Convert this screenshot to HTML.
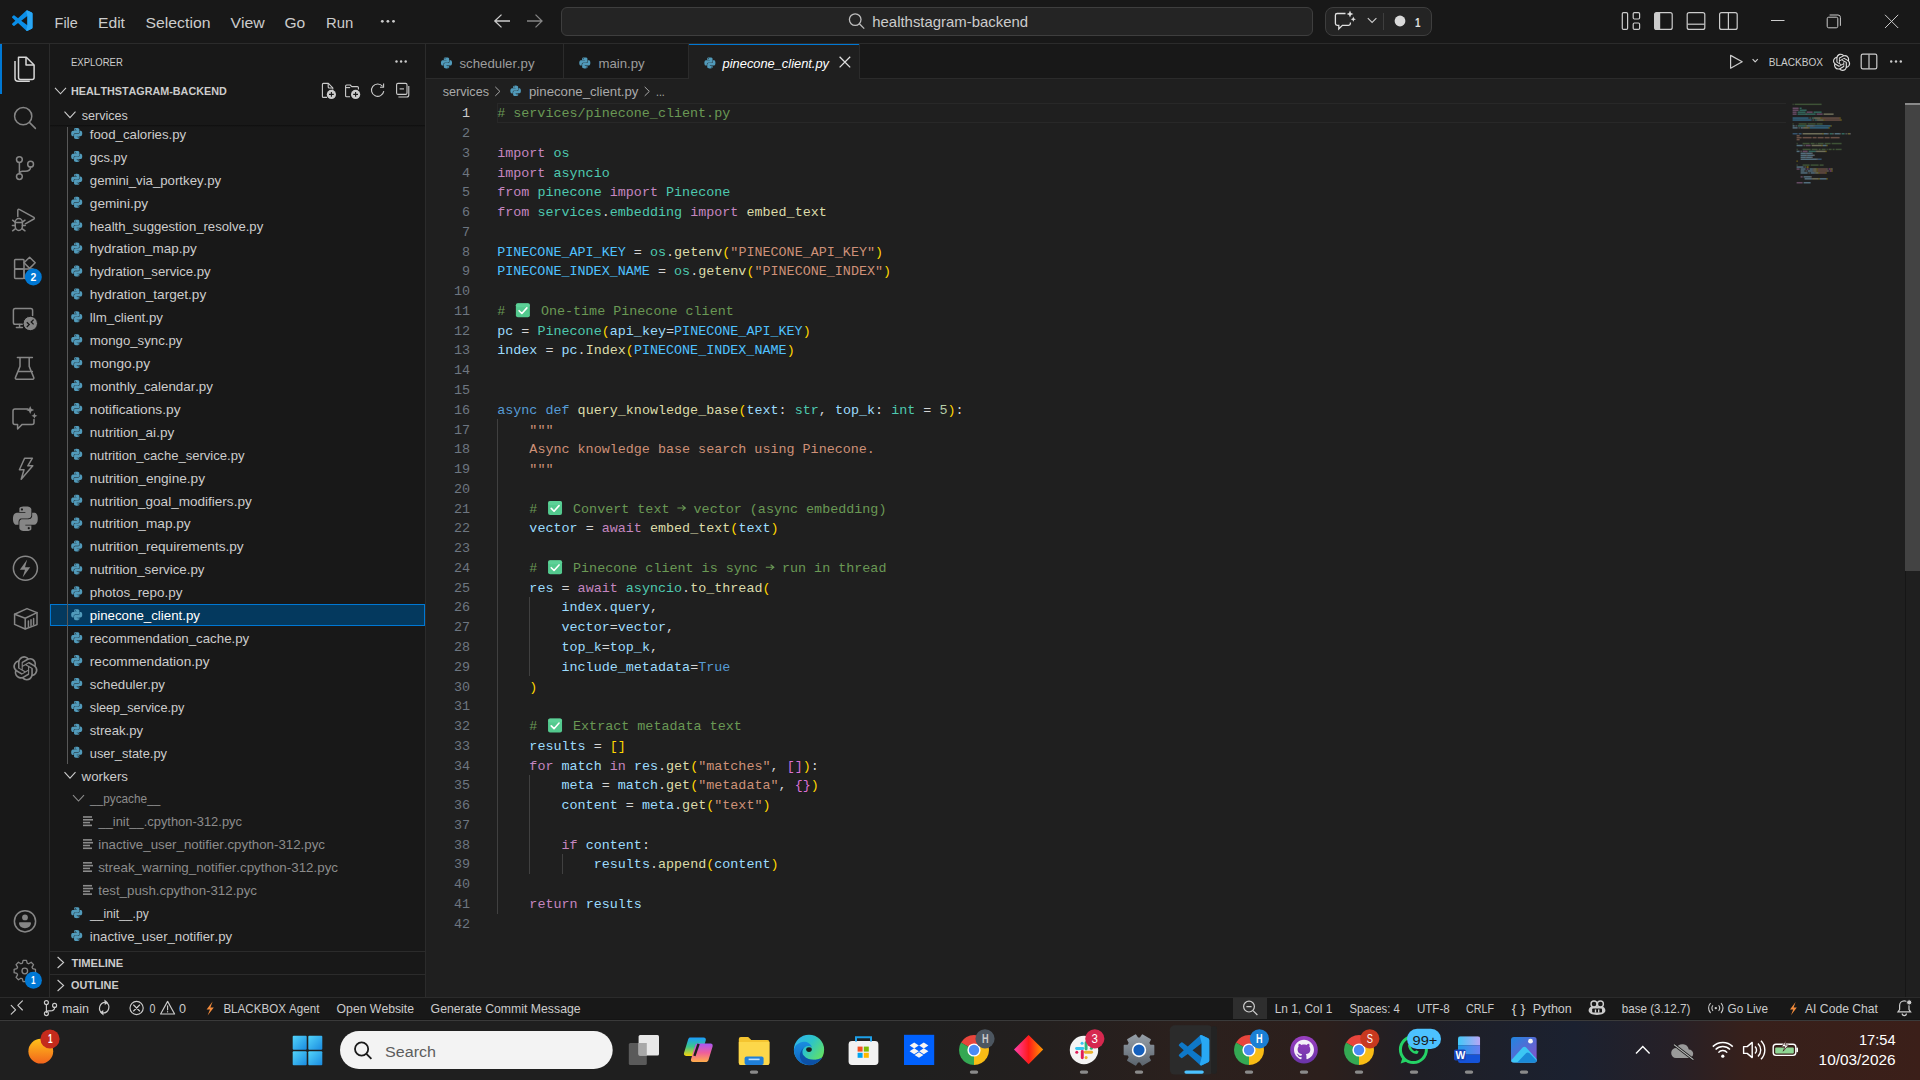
<!DOCTYPE html>
<html><head><meta charset="utf-8"><title>pinecone_client.py - healthstagram-backend - Visual Studio Code</title>
<style>
html,body{margin:0;padding:0;width:1920px;height:1080px;overflow:hidden;background:#1f1f1f;font-family:"Liberation Sans",sans-serif}
#ui{position:absolute;left:0;top:0;width:1920px;height:1080px}
svg{position:absolute;left:0;top:0}
text{font-kerning:none}
</style></head><body>
<div id="ui">
<div style="position:absolute;left:0px;top:0px;width:1920px;height:43px;background:#181818;"></div>
<div style="position:absolute;left:0px;top:43px;width:1920px;height:1px;background:#2b2b2b;"></div>
<div style="position:absolute;left:0px;top:44px;width:49px;height:953px;background:#181818;"></div>
<div style="position:absolute;left:49px;top:44px;width:1px;height:953px;background:#2b2b2b;"></div>
<div style="position:absolute;left:50px;top:44px;width:375px;height:953px;background:#181818;"></div>
<div style="position:absolute;left:425px;top:44px;width:1px;height:953px;background:#2b2b2b;"></div>
<div style="position:absolute;left:426px;top:44px;width:1494px;height:35px;background:#181818;"></div>
<div style="position:absolute;left:426px;top:78px;width:1494px;height:1px;background:#2b2b2b;"></div>
<div style="position:absolute;left:426px;top:79px;width:1494px;height:918px;background:#1f1f1f;"></div>
<div style="position:absolute;left:0px;top:997px;width:1920px;height:1px;background:#2b2b2b;"></div>
<div style="position:absolute;left:0px;top:998px;width:1920px;height:21px;background:#181818;"></div>
<div style="position:absolute;left:0px;top:1019px;width:1920px;height:1px;background:#141414;"></div>
<div style="position:absolute;left:0px;top:1020px;width:1920px;height:1px;background:#3a3a3a;"></div>
<div style="position:absolute;left:0px;top:1021px;width:1920px;height:59px;background:linear-gradient(90deg,#1f1f1f 0%,#1f1f1f 47%,#231f1e 54%,#2b201d 62%,#2c1f1c 69%,#1f1f26 74%,#1b2130 82%,#262027 87%,#37201b 91%,#3b1f19 100%);"></div>
<div style="position:absolute;left:497px;top:103px;width:1288px;height:18px;border:1px solid #282828;border-right:none;box-sizing:content-box"></div>
<div style="position:absolute;left:497px;top:419px;width:1px;height:495px;background:#404040;"></div>
<div style="position:absolute;left:529px;top:597px;width:1px;height:79px;background:#404040;"></div>
<div style="position:absolute;left:529px;top:775px;width:1px;height:99px;background:#404040;"></div>
<div style="position:absolute;left:562px;top:854px;width:1px;height:20px;background:#404040;"></div>
<div style="position:absolute;left:50px;top:125px;width:375px;height:2px;background:linear-gradient(#0e0e0e,rgba(14,14,14,0));"></div>
<div style="position:absolute;left:50px;top:604px;width:373px;height:20px;background:#04395e;border:1px solid #0078d4"></div>
<div style="position:absolute;left:67px;top:127px;width:1px;height:637px;background:#585858;"></div>
<div style="position:absolute;left:50px;top:951px;width:375px;height:1px;background:#2b2b2b;"></div>
<div style="position:absolute;left:50px;top:974px;width:375px;height:1px;background:#2b2b2b;"></div>
<div style="position:absolute;left:561px;top:7px;width:750px;height:27px;border:1px solid #3e3e3e;border-radius:6px;background:#242424"></div>
<div style="position:absolute;left:1325px;top:7px;width:105px;height:27px;border:1px solid #3e3e3e;border-radius:8px;background:#242424"></div>
<div style="position:absolute;left:1383px;top:13px;width:1px;height:17px;background:#3e3e3e;"></div>
<div style="position:absolute;left:0px;top:44px;width:2px;height:50px;background:#0078d4;"></div>
<div style="position:absolute;left:563px;top:44px;width:1px;height:35px;background:#2b2b2b;"></div>
<div style="position:absolute;left:688px;top:44px;width:1px;height:35px;background:#2b2b2b;"></div>
<div style="position:absolute;left:859px;top:44px;width:1px;height:35px;background:#2b2b2b;"></div>
<div style="position:absolute;left:689px;top:44px;width:170px;height:35px;background:#1f1f1f;"></div>
<div style="position:absolute;left:689px;top:44px;width:170px;height:1px;background:#0078d4;"></div>
<div style="position:absolute;left:1905px;top:103px;width:15px;height:468px;background:#434343;"></div>
<div style="position:absolute;left:1905px;top:103px;width:15px;height:2px;background:#8a8a8a;"></div>
<div style="position:absolute;left:1905px;top:571px;width:1px;height:426px;background:#161616;"></div>
<div style="position:absolute;left:1233px;top:998px;width:34px;height:21px;background:#2e2e2e;"></div>
</div>
<svg width="1920" height="1080" viewBox="0 0 1920 1080">
<text x="461.96" y="117.20" font-family="Liberation Mono" font-size="13.4" fill="#cccccc">1</text>
<text x="461.96" y="136.97" font-family="Liberation Mono" font-size="13.4" fill="#6e7681">2</text>
<text x="461.96" y="156.74" font-family="Liberation Mono" font-size="13.4" fill="#6e7681">3</text>
<text x="461.96" y="176.51" font-family="Liberation Mono" font-size="13.4" fill="#6e7681">4</text>
<text x="461.96" y="196.28" font-family="Liberation Mono" font-size="13.4" fill="#6e7681">5</text>
<text x="461.96" y="216.05" font-family="Liberation Mono" font-size="13.4" fill="#6e7681">6</text>
<text x="461.96" y="235.82" font-family="Liberation Mono" font-size="13.4" fill="#6e7681">7</text>
<text x="461.96" y="255.59" font-family="Liberation Mono" font-size="13.4" fill="#6e7681">8</text>
<text x="461.96" y="275.36" font-family="Liberation Mono" font-size="13.4" fill="#6e7681">9</text>
<text x="453.92" y="295.13" font-family="Liberation Mono" font-size="13.4" fill="#6e7681">10</text>
<text x="453.92" y="314.90" font-family="Liberation Mono" font-size="13.4" fill="#6e7681">11</text>
<text x="453.92" y="334.67" font-family="Liberation Mono" font-size="13.4" fill="#6e7681">12</text>
<text x="453.92" y="354.44" font-family="Liberation Mono" font-size="13.4" fill="#6e7681">13</text>
<text x="453.92" y="374.21" font-family="Liberation Mono" font-size="13.4" fill="#6e7681">14</text>
<text x="453.92" y="393.98" font-family="Liberation Mono" font-size="13.4" fill="#6e7681">15</text>
<text x="453.92" y="413.75" font-family="Liberation Mono" font-size="13.4" fill="#6e7681">16</text>
<text x="453.92" y="433.52" font-family="Liberation Mono" font-size="13.4" fill="#6e7681">17</text>
<text x="453.92" y="453.29" font-family="Liberation Mono" font-size="13.4" fill="#6e7681">18</text>
<text x="453.92" y="473.06" font-family="Liberation Mono" font-size="13.4" fill="#6e7681">19</text>
<text x="453.92" y="492.83" font-family="Liberation Mono" font-size="13.4" fill="#6e7681">20</text>
<text x="453.92" y="512.60" font-family="Liberation Mono" font-size="13.4" fill="#6e7681">21</text>
<text x="453.92" y="532.37" font-family="Liberation Mono" font-size="13.4" fill="#6e7681">22</text>
<text x="453.92" y="552.14" font-family="Liberation Mono" font-size="13.4" fill="#6e7681">23</text>
<text x="453.92" y="571.91" font-family="Liberation Mono" font-size="13.4" fill="#6e7681">24</text>
<text x="453.92" y="591.68" font-family="Liberation Mono" font-size="13.4" fill="#6e7681">25</text>
<text x="453.92" y="611.45" font-family="Liberation Mono" font-size="13.4" fill="#6e7681">26</text>
<text x="453.92" y="631.22" font-family="Liberation Mono" font-size="13.4" fill="#6e7681">27</text>
<text x="453.92" y="650.99" font-family="Liberation Mono" font-size="13.4" fill="#6e7681">28</text>
<text x="453.92" y="670.76" font-family="Liberation Mono" font-size="13.4" fill="#6e7681">29</text>
<text x="453.92" y="690.53" font-family="Liberation Mono" font-size="13.4" fill="#6e7681">30</text>
<text x="453.92" y="710.30" font-family="Liberation Mono" font-size="13.4" fill="#6e7681">31</text>
<text x="453.92" y="730.07" font-family="Liberation Mono" font-size="13.4" fill="#6e7681">32</text>
<text x="453.92" y="749.84" font-family="Liberation Mono" font-size="13.4" fill="#6e7681">33</text>
<text x="453.92" y="769.61" font-family="Liberation Mono" font-size="13.4" fill="#6e7681">34</text>
<text x="453.92" y="789.38" font-family="Liberation Mono" font-size="13.4" fill="#6e7681">35</text>
<text x="453.92" y="809.15" font-family="Liberation Mono" font-size="13.4" fill="#6e7681">36</text>
<text x="453.92" y="828.92" font-family="Liberation Mono" font-size="13.4" fill="#6e7681">37</text>
<text x="453.92" y="848.69" font-family="Liberation Mono" font-size="13.4" fill="#6e7681">38</text>
<text x="453.92" y="868.46" font-family="Liberation Mono" font-size="13.4" fill="#6e7681">39</text>
<text x="453.92" y="888.23" font-family="Liberation Mono" font-size="13.4" fill="#6e7681">40</text>
<text x="453.92" y="908.00" font-family="Liberation Mono" font-size="13.4" fill="#6e7681">41</text>
<text x="453.92" y="927.77" font-family="Liberation Mono" font-size="13.4" fill="#6e7681">42</text>
<text y="117.20" font-family="Liberation Mono" font-size="13.4" style="white-space:pre"><tspan x="497.20" fill="#6a9955"># services/pinecone_client.py</tspan></text>
<text y="156.74" font-family="Liberation Mono" font-size="13.4" style="white-space:pre"><tspan x="497.20" fill="#c586c0">import</tspan><tspan x="553.48" fill="#4ec9b0">os</tspan></text>
<text y="176.51" font-family="Liberation Mono" font-size="13.4" style="white-space:pre"><tspan x="497.20" fill="#c586c0">import</tspan><tspan x="553.48" fill="#4ec9b0">asyncio</tspan></text>
<text y="196.28" font-family="Liberation Mono" font-size="13.4" style="white-space:pre"><tspan x="497.20" fill="#c586c0">from</tspan><tspan x="537.40" fill="#4ec9b0">pinecone</tspan><tspan x="609.76" fill="#c586c0">import</tspan><tspan x="666.04" fill="#4ec9b0">Pinecone</tspan></text>
<text y="216.05" font-family="Liberation Mono" font-size="13.4" style="white-space:pre"><tspan x="497.20" fill="#c586c0">from</tspan><tspan x="537.40" fill="#4ec9b0">services</tspan><tspan x="601.72" fill="#d4d4d4">.</tspan><tspan x="609.76" fill="#4ec9b0">embedding</tspan><tspan x="690.16" fill="#c586c0">import</tspan><tspan x="746.44" fill="#dcdcaa">embed_text</tspan></text>
<text y="255.59" font-family="Liberation Mono" font-size="13.4" style="white-space:pre"><tspan x="497.20" fill="#4fc1ff">PINECONE_API_KEY</tspan><tspan x="625.84" fill="#d4d4d4"> = </tspan><tspan x="649.96" fill="#4ec9b0">os</tspan><tspan x="666.04" fill="#d4d4d4">.</tspan><tspan x="674.08" fill="#dcdcaa">getenv</tspan><tspan x="722.32" fill="#ffd700">(</tspan><tspan x="730.36" fill="#ce9178">&quot;PINECONE_API_KEY&quot;</tspan><tspan x="875.08" fill="#ffd700">)</tspan></text>
<text y="275.36" font-family="Liberation Mono" font-size="13.4" style="white-space:pre"><tspan x="497.20" fill="#4fc1ff">PINECONE_INDEX_NAME</tspan><tspan x="649.96" fill="#d4d4d4"> = </tspan><tspan x="674.08" fill="#4ec9b0">os</tspan><tspan x="690.16" fill="#d4d4d4">.</tspan><tspan x="698.20" fill="#dcdcaa">getenv</tspan><tspan x="746.44" fill="#ffd700">(</tspan><tspan x="754.48" fill="#ce9178">&quot;PINECONE_INDEX&quot;</tspan><tspan x="883.12" fill="#ffd700">)</tspan></text>
<g transform="translate(515.88,303.30)"><rect x="0" y="0" width="14" height="14" rx="2" fill="#53c98e"/><rect x="0" y="0" width="14" height="4" rx="2" fill="#62d79c" opacity="0.6"/><path d="M3.2 7.4 L6 10.2 L11 4.6" stroke="#ffffff" stroke-width="1.6" fill="none" stroke-linecap="round" stroke-linejoin="round"/></g>
<text y="314.90" font-family="Liberation Mono" font-size="13.4" style="white-space:pre"><tspan x="497.20" fill="#6a9955"># </tspan><tspan x="532.86" fill="#6a9955"> One-time Pinecone client</tspan></text>
<text y="334.67" font-family="Liberation Mono" font-size="13.4" style="white-space:pre"><tspan x="497.20" fill="#9cdcfe">pc</tspan><tspan x="513.28" fill="#d4d4d4"> = </tspan><tspan x="537.40" fill="#4ec9b0">Pinecone</tspan><tspan x="601.72" fill="#ffd700">(</tspan><tspan x="609.76" fill="#9cdcfe">api_key</tspan><tspan x="666.04" fill="#d4d4d4">=</tspan><tspan x="674.08" fill="#4fc1ff">PINECONE_API_KEY</tspan><tspan x="802.72" fill="#ffd700">)</tspan></text>
<text y="354.44" font-family="Liberation Mono" font-size="13.4" style="white-space:pre"><tspan x="497.20" fill="#9cdcfe">index</tspan><tspan x="537.40" fill="#d4d4d4"> = </tspan><tspan x="561.52" fill="#9cdcfe">pc</tspan><tspan x="577.60" fill="#d4d4d4">.</tspan><tspan x="585.64" fill="#dcdcaa">Index</tspan><tspan x="625.84" fill="#ffd700">(</tspan><tspan x="633.88" fill="#4fc1ff">PINECONE_INDEX_NAME</tspan><tspan x="786.64" fill="#ffd700">)</tspan></text>
<text y="413.75" font-family="Liberation Mono" font-size="13.4" style="white-space:pre"><tspan x="497.20" fill="#569cd6">async</tspan><tspan x="545.44" fill="#569cd6">def</tspan><tspan x="577.60" fill="#dcdcaa">query_knowledge_base</tspan><tspan x="738.40" fill="#ffd700">(</tspan><tspan x="746.44" fill="#9cdcfe">text</tspan><tspan x="778.60" fill="#d4d4d4">: </tspan><tspan x="794.68" fill="#4ec9b0">str</tspan><tspan x="818.80" fill="#d4d4d4">, </tspan><tspan x="834.88" fill="#9cdcfe">top_k</tspan><tspan x="875.08" fill="#d4d4d4">: </tspan><tspan x="891.16" fill="#4ec9b0">int</tspan><tspan x="915.28" fill="#d4d4d4"> = </tspan><tspan x="939.40" fill="#b5cea8">5</tspan><tspan x="947.44" fill="#ffd700">)</tspan><tspan x="955.48" fill="#d4d4d4">:</tspan></text>
<text y="433.52" font-family="Liberation Mono" font-size="13.4" style="white-space:pre"><tspan x="529.36" fill="#ce9178">&quot;&quot;&quot;</tspan></text>
<text y="453.29" font-family="Liberation Mono" font-size="13.4" style="white-space:pre"><tspan x="529.36" fill="#ce9178">Async knowledge base search using Pinecone.</tspan></text>
<text y="473.06" font-family="Liberation Mono" font-size="13.4" style="white-space:pre"><tspan x="529.36" fill="#ce9178">&quot;&quot;&quot;</tspan></text>
<g transform="translate(548.04,501.00)"><rect x="0" y="0" width="14" height="14" rx="2" fill="#53c98e"/><rect x="0" y="0" width="14" height="4" rx="2" fill="#62d79c" opacity="0.6"/><path d="M3.2 7.4 L6 10.2 L11 4.6" stroke="#ffffff" stroke-width="1.6" fill="none" stroke-linecap="round" stroke-linejoin="round"/></g>
<path d="M677.38 508.00h8.2M682.18 505.40l3.2 2.6-3.2 2.6" fill="none" stroke="#6a9955" stroke-width="1.1"/>
<text y="512.60" font-family="Liberation Mono" font-size="13.4" style="white-space:pre"><tspan x="529.36" fill="#6a9955"># </tspan><tspan x="565.02" fill="#6a9955"> Convert text   vector (async embedding)</tspan></text>
<text y="532.37" font-family="Liberation Mono" font-size="13.4" style="white-space:pre"><tspan x="529.36" fill="#9cdcfe">vector</tspan><tspan x="577.60" fill="#d4d4d4"> = </tspan><tspan x="601.72" fill="#c586c0">await</tspan><tspan x="649.96" fill="#dcdcaa">embed_text</tspan><tspan x="730.36" fill="#ffd700">(</tspan><tspan x="738.40" fill="#9cdcfe">text</tspan><tspan x="770.56" fill="#ffd700">)</tspan></text>
<g transform="translate(548.04,560.31)"><rect x="0" y="0" width="14" height="14" rx="2" fill="#53c98e"/><rect x="0" y="0" width="14" height="4" rx="2" fill="#62d79c" opacity="0.6"/><path d="M3.2 7.4 L6 10.2 L11 4.6" stroke="#ffffff" stroke-width="1.6" fill="none" stroke-linecap="round" stroke-linejoin="round"/></g>
<path d="M765.82 567.31h8.2M770.62 564.71l3.2 2.6-3.2 2.6" fill="none" stroke="#6a9955" stroke-width="1.1"/>
<text y="571.91" font-family="Liberation Mono" font-size="13.4" style="white-space:pre"><tspan x="529.36" fill="#6a9955"># </tspan><tspan x="565.02" fill="#6a9955"> Pinecone client is sync   run in thread</tspan></text>
<text y="591.68" font-family="Liberation Mono" font-size="13.4" style="white-space:pre"><tspan x="529.36" fill="#9cdcfe">res</tspan><tspan x="553.48" fill="#d4d4d4"> = </tspan><tspan x="577.60" fill="#c586c0">await</tspan><tspan x="625.84" fill="#4ec9b0">asyncio</tspan><tspan x="682.12" fill="#d4d4d4">.</tspan><tspan x="690.16" fill="#dcdcaa">to_thread</tspan><tspan x="762.52" fill="#ffd700">(</tspan></text>
<text y="611.45" font-family="Liberation Mono" font-size="13.4" style="white-space:pre"><tspan x="561.52" fill="#9cdcfe">index</tspan><tspan x="601.72" fill="#d4d4d4">.</tspan><tspan x="609.76" fill="#9cdcfe">query</tspan><tspan x="649.96" fill="#d4d4d4">,</tspan></text>
<text y="631.22" font-family="Liberation Mono" font-size="13.4" style="white-space:pre"><tspan x="561.52" fill="#9cdcfe">vector</tspan><tspan x="609.76" fill="#d4d4d4">=</tspan><tspan x="617.80" fill="#9cdcfe">vector</tspan><tspan x="666.04" fill="#d4d4d4">,</tspan></text>
<text y="650.99" font-family="Liberation Mono" font-size="13.4" style="white-space:pre"><tspan x="561.52" fill="#9cdcfe">top_k</tspan><tspan x="601.72" fill="#d4d4d4">=</tspan><tspan x="609.76" fill="#9cdcfe">top_k</tspan><tspan x="649.96" fill="#d4d4d4">,</tspan></text>
<text y="670.76" font-family="Liberation Mono" font-size="13.4" style="white-space:pre"><tspan x="561.52" fill="#9cdcfe">include_metadata</tspan><tspan x="690.16" fill="#d4d4d4">=</tspan><tspan x="698.20" fill="#569cd6">True</tspan></text>
<text y="690.53" font-family="Liberation Mono" font-size="13.4" style="white-space:pre"><tspan x="529.36" fill="#ffd700">)</tspan></text>
<g transform="translate(548.04,718.47)"><rect x="0" y="0" width="14" height="14" rx="2" fill="#53c98e"/><rect x="0" y="0" width="14" height="4" rx="2" fill="#62d79c" opacity="0.6"/><path d="M3.2 7.4 L6 10.2 L11 4.6" stroke="#ffffff" stroke-width="1.6" fill="none" stroke-linecap="round" stroke-linejoin="round"/></g>
<text y="730.07" font-family="Liberation Mono" font-size="13.4" style="white-space:pre"><tspan x="529.36" fill="#6a9955"># </tspan><tspan x="565.02" fill="#6a9955"> Extract metadata text</tspan></text>
<text y="749.84" font-family="Liberation Mono" font-size="13.4" style="white-space:pre"><tspan x="529.36" fill="#9cdcfe">results</tspan><tspan x="585.64" fill="#d4d4d4"> = </tspan><tspan x="609.76" fill="#ffd700">[]</tspan></text>
<text y="769.61" font-family="Liberation Mono" font-size="13.4" style="white-space:pre"><tspan x="529.36" fill="#c586c0">for</tspan><tspan x="561.52" fill="#9cdcfe">match</tspan><tspan x="609.76" fill="#c586c0">in</tspan><tspan x="633.88" fill="#9cdcfe">res</tspan><tspan x="658.00" fill="#d4d4d4">.</tspan><tspan x="666.04" fill="#dcdcaa">get</tspan><tspan x="690.16" fill="#ffd700">(</tspan><tspan x="698.20" fill="#ce9178">&quot;matches&quot;</tspan><tspan x="770.56" fill="#d4d4d4">, </tspan><tspan x="786.64" fill="#da70d6">[]</tspan><tspan x="802.72" fill="#ffd700">)</tspan><tspan x="810.76" fill="#d4d4d4">:</tspan></text>
<text y="789.38" font-family="Liberation Mono" font-size="13.4" style="white-space:pre"><tspan x="561.52" fill="#9cdcfe">meta</tspan><tspan x="593.68" fill="#d4d4d4"> = </tspan><tspan x="617.80" fill="#9cdcfe">match</tspan><tspan x="658.00" fill="#d4d4d4">.</tspan><tspan x="666.04" fill="#dcdcaa">get</tspan><tspan x="690.16" fill="#ffd700">(</tspan><tspan x="698.20" fill="#ce9178">&quot;metadata&quot;</tspan><tspan x="778.60" fill="#d4d4d4">, </tspan><tspan x="794.68" fill="#da70d6">{}</tspan><tspan x="810.76" fill="#ffd700">)</tspan></text>
<text y="809.15" font-family="Liberation Mono" font-size="13.4" style="white-space:pre"><tspan x="561.52" fill="#9cdcfe">content</tspan><tspan x="617.80" fill="#d4d4d4"> = </tspan><tspan x="641.92" fill="#9cdcfe">meta</tspan><tspan x="674.08" fill="#d4d4d4">.</tspan><tspan x="682.12" fill="#dcdcaa">get</tspan><tspan x="706.24" fill="#ffd700">(</tspan><tspan x="714.28" fill="#ce9178">&quot;text&quot;</tspan><tspan x="762.52" fill="#ffd700">)</tspan></text>
<text y="848.69" font-family="Liberation Mono" font-size="13.4" style="white-space:pre"><tspan x="561.52" fill="#c586c0">if</tspan><tspan x="585.64" fill="#9cdcfe">content</tspan><tspan x="641.92" fill="#d4d4d4">:</tspan></text>
<text y="868.46" font-family="Liberation Mono" font-size="13.4" style="white-space:pre"><tspan x="593.68" fill="#9cdcfe">results</tspan><tspan x="649.96" fill="#d4d4d4">.</tspan><tspan x="658.00" fill="#dcdcaa">append</tspan><tspan x="706.24" fill="#ffd700">(</tspan><tspan x="714.28" fill="#9cdcfe">content</tspan><tspan x="770.56" fill="#ffd700">)</tspan></text>
<text y="908.00" font-family="Liberation Mono" font-size="13.4" style="white-space:pre"><tspan x="529.36" fill="#c586c0">return</tspan><tspan x="585.64" fill="#9cdcfe">results</tspan></text>
<text x="71.00" y="66.10" font-family="Liberation Sans" font-size="11.2" font-weight="normal" font-style="normal" fill="#cccccc" textLength="51.81" lengthAdjust="spacingAndGlyphs" style="white-space:pre">EXPLORER</text>
<circle cx="396.50" cy="61.5" r="1.2" fill="#cccccc"/>
<circle cx="401.10" cy="61.5" r="1.2" fill="#cccccc"/>
<circle cx="405.70" cy="61.5" r="1.2" fill="#cccccc"/>
<path d="M55.00 87.80 L60.50 93.80 L66.00 87.80" stroke="#cccccc" stroke-width="1.1" fill="none"/>
<text x="71.10" y="95.00" font-family="Liberation Sans" font-size="11.2" font-weight="bold" font-style="normal" fill="#cccccc" textLength="155.60" lengthAdjust="spacingAndGlyphs" style="white-space:pre">HEALTHSTAGRAM-BACKEND</text>
<g stroke="#cccccc" stroke-width="1.1" fill="none" stroke-linejoin="round"><path d="M327 97.4h-3.6a1 1 0 0 1-1-1V84.4a1 1 0 0 1 1-1h5l4.4 4.4v1.8"/><path d="M328.2 83.6v3.4a1 1 0 0 0 1 1h3.2"/><path d="M350 96.8h-3.4a1 1 0 0 1-1-1v-9.8a1 1 0 0 1 1-1h3.6l1.6 1.6h5.6a1 1 0 0 1 1 1v2"/><path d="M345.8 87.6h4.4"/><path d="M382.6 86.4a6.2 6.2 0 1 0 1.2 4.8"/><path d="M383.6 83.6v3.6h-3.6"/><rect x="396.6" y="83.4" width="10.4" height="11" rx="1.4"/><path d="M399.6 88.9h4.4"/><path d="M398.4 97h8.4a2 2 0 0 0 2-2v-9"/></g><circle cx="331.4" cy="94.4" r="4.6" fill="#cccccc"/><path d="M331.4 92v4.8M329 94.4h4.8" stroke="#181818" stroke-width="1.1"/><circle cx="355.6" cy="94.4" r="4.6" fill="#cccccc"/><path d="M355.6 92v4.8M353.2 94.4h4.8" stroke="#181818" stroke-width="1.1"/>
<path d="M64.50 111.60 L70.00 117.60 L75.50 111.60" stroke="#cccccc" stroke-width="1.1" fill="none"/>
<text x="81.70" y="120.00" font-family="Liberation Sans" font-size="13.2" font-weight="normal" font-style="normal" fill="#cccccc" textLength="46.07" lengthAdjust="spacingAndGlyphs" style="white-space:pre">services</text>
<path transform="translate(71.20,128.00) scale(0.4583)" d="M14.25.18l.9.2.73.26.59.3.45.32.34.34.25.34.16.33.1.3.04.26.02.2-.01.13V8.5l-.05.63-.13.55-.21.46-.26.38-.3.31-.33.25-.35.19-.35.14-.33.1-.3.07-.26.04-.21.02H8.77l-.69.05-.59.14-.5.22-.41.27-.33.32-.27.35-.2.36-.15.37-.1.35-.07.32-.04.27-.02.21v3.06H3.17l-.21-.03-.28-.07-.32-.12-.35-.18-.36-.26-.36-.36-.35-.46-.32-.59-.28-.73-.21-.88-.14-1.050-.05-1.23.06-1.22.16-1.04.24-.87.32-.71.36-.57.4-.44.42-.33.42-.24.4-.16.36-.1.32-.05.24-.01h.16l.06.01h8.16v-.83H6.18l-.01-2.75-.02-.37.05-.34.11-.31.17-.28.25-.26.31-.23.38-.2.44-.18.51-.15.58-.12.64-.1.71-.06.77-.04.84-.02 1.27.05zm-6.3 1.98l-.23.33-.08.41.08.41.23.34.33.22.41.09.41-.09.33-.22.23-.34.08-.41-.08-.41-.23-.33-.33-.22-.41-.09-.41.09zm13.090 3.95l.28.06.32.12.35.18.36.27.36.35.35.47.32.59.28.73.21.88.14 1.04.05 1.23-.06 1.23-.16 1.04-.24.86-.32.71-.36.57-.4.45-.42.33-.42.24-.4.16-.36.09-.32.05-.24.02-.16-.01h-8.22v.82h5.84l.01 2.76.02.36-.05.34-.11.31-.17.29-.25.25-.31.24-.38.2-.44.17-.51.15-.58.13-.64.09-.71.07-.77.04-.84.01-1.27-.04-1.07-.14-.9-.2-.73-.25-.59-.3-.45-.33-.34-.34-.25-.34-.16-.33-.1-.3-.04-.25-.02-.2.01-.13v-5.34l.05-.64.13-.54.21-.46.26-.38.3-.32.33-.24.35-.2.35-.14.33-.1.3-.06.26-.04.21-.02.13-.01h5.84l.69-.05.59-.14.5-.21.41-.28.33-.32.27-.35.2-.36.15-.36.1-.35.07-.32.04-.28.02-.21V6.07h2.09l.14.01zm-6.47 14.25l-.23.33-.08.41.08.41.23.33.33.23.41.08.41-.08.33-.23.23-.33.08-.41-.08-.41-.23-.33-.33-.23-.41-.08-.41.08z" fill="#519aba"/>
<text x="89.80" y="138.90" font-family="Liberation Sans" font-size="13.2" font-weight="normal" font-style="normal" fill="#cccccc" textLength="96.43" lengthAdjust="spacingAndGlyphs" style="white-space:pre">food_calories.py</text>
<path transform="translate(71.20,150.92) scale(0.4583)" d="M14.25.18l.9.2.73.26.59.3.45.32.34.34.25.34.16.33.1.3.04.26.02.2-.01.13V8.5l-.05.63-.13.55-.21.46-.26.38-.3.31-.33.25-.35.19-.35.14-.33.1-.3.07-.26.04-.21.02H8.77l-.69.05-.59.14-.5.22-.41.27-.33.32-.27.35-.2.36-.15.37-.1.35-.07.32-.04.27-.02.21v3.06H3.17l-.21-.03-.28-.07-.32-.12-.35-.18-.36-.26-.36-.36-.35-.46-.32-.59-.28-.73-.21-.88-.14-1.050-.05-1.23.06-1.22.16-1.04.24-.87.32-.71.36-.57.4-.44.42-.33.42-.24.4-.16.36-.1.32-.05.24-.01h.16l.06.01h8.16v-.83H6.18l-.01-2.75-.02-.37.05-.34.11-.31.17-.28.25-.26.31-.23.38-.2.44-.18.51-.15.58-.12.64-.1.71-.06.77-.04.84-.02 1.27.05zm-6.3 1.98l-.23.33-.08.41.08.41.23.34.33.22.41.09.41-.09.33-.22.23-.34.08-.41-.08-.41-.23-.33-.33-.22-.41-.09-.41.09zm13.090 3.95l.28.06.32.12.35.18.36.27.36.35.35.47.32.59.28.73.21.88.14 1.04.05 1.23-.06 1.23-.16 1.04-.24.86-.32.71-.36.57-.4.45-.42.33-.42.24-.4.16-.36.09-.32.05-.24.02-.16-.01h-8.22v.82h5.84l.01 2.76.02.36-.05.34-.11.31-.17.29-.25.25-.31.24-.38.2-.44.17-.51.15-.58.13-.64.09-.71.07-.77.04-.84.01-1.27-.04-1.07-.14-.9-.2-.73-.25-.59-.3-.45-.33-.34-.34-.25-.34-.16-.33-.1-.3-.04-.25-.02-.2.01-.13v-5.34l.05-.64.13-.54.21-.46.26-.38.3-.32.33-.24.35-.2.35-.14.33-.1.3-.06.26-.04.21-.02.13-.01h5.84l.69-.05.59-.14.5-.21.41-.28.33-.32.27-.35.2-.36.15-.36.1-.35.07-.32.04-.28.02-.21V6.07h2.09l.14.01zm-6.47 14.25l-.23.33-.08.41.08.41.23.33.33.23.41.08.41-.08.33-.23.23-.33.08-.41-.08-.41-.23-.33-.33-.23-.41-.08-.41.08z" fill="#519aba"/>
<text x="89.80" y="161.82" font-family="Liberation Sans" font-size="13.2" font-weight="normal" font-style="normal" fill="#cccccc" textLength="37.30" lengthAdjust="spacingAndGlyphs" style="white-space:pre">gcs.py</text>
<path transform="translate(71.20,173.83) scale(0.4583)" d="M14.25.18l.9.2.73.26.59.3.45.32.34.34.25.34.16.33.1.3.04.26.02.2-.01.13V8.5l-.05.63-.13.55-.21.46-.26.38-.3.31-.33.25-.35.19-.35.14-.33.1-.3.07-.26.04-.21.02H8.77l-.69.05-.59.14-.5.22-.41.27-.33.32-.27.35-.2.36-.15.37-.1.35-.07.32-.04.27-.02.21v3.06H3.17l-.21-.03-.28-.07-.32-.12-.35-.18-.36-.26-.36-.36-.35-.46-.32-.59-.28-.73-.21-.88-.14-1.050-.05-1.23.06-1.22.16-1.04.24-.87.32-.71.36-.57.4-.44.42-.33.42-.24.4-.16.36-.1.32-.05.24-.01h.16l.06.01h8.16v-.83H6.18l-.01-2.75-.02-.37.05-.34.11-.31.17-.28.25-.26.31-.23.38-.2.44-.18.51-.15.58-.12.64-.1.71-.06.77-.04.84-.02 1.27.05zm-6.3 1.98l-.23.33-.08.41.08.41.23.34.33.22.41.09.41-.09.33-.22.23-.34.08-.41-.08-.41-.23-.33-.33-.22-.41-.09-.41.09zm13.090 3.95l.28.06.32.12.35.18.36.27.36.35.35.47.32.59.28.73.21.88.14 1.04.05 1.23-.06 1.23-.16 1.04-.24.86-.32.71-.36.57-.4.45-.42.33-.42.24-.4.16-.36.09-.32.05-.24.02-.16-.01h-8.22v.82h5.84l.01 2.76.02.36-.05.34-.11.31-.17.29-.25.25-.31.24-.38.2-.44.17-.51.15-.58.13-.64.09-.71.07-.77.04-.84.01-1.27-.04-1.07-.14-.9-.2-.73-.25-.59-.3-.45-.33-.34-.34-.25-.34-.16-.33-.1-.3-.04-.25-.02-.2.01-.13v-5.34l.05-.64.13-.54.21-.46.26-.38.3-.32.33-.24.35-.2.35-.14.33-.1.3-.06.26-.04.21-.02.13-.01h5.84l.69-.05.59-.14.5-.21.41-.28.33-.32.27-.35.2-.36.15-.36.1-.35.07-.32.04-.28.02-.21V6.07h2.09l.14.01zm-6.47 14.25l-.23.33-.08.41.08.41.23.33.33.23.41.08.41-.08.33-.23.23-.33.08-.41-.08-.41-.23-.33-.33-.23-.41-.08-.41.08z" fill="#519aba"/>
<text x="89.80" y="184.73" font-family="Liberation Sans" font-size="13.2" font-weight="normal" font-style="normal" fill="#cccccc" textLength="131.41" lengthAdjust="spacingAndGlyphs" style="white-space:pre">gemini_via_portkey.py</text>
<path transform="translate(71.20,196.75) scale(0.4583)" d="M14.25.18l.9.2.73.26.59.3.45.32.34.34.25.34.16.33.1.3.04.26.02.2-.01.13V8.5l-.05.63-.13.55-.21.46-.26.38-.3.31-.33.25-.35.19-.35.14-.33.1-.3.07-.26.04-.21.02H8.77l-.69.05-.59.14-.5.22-.41.27-.33.32-.27.35-.2.36-.15.37-.1.35-.07.32-.04.27-.02.21v3.06H3.17l-.21-.03-.28-.07-.32-.12-.35-.18-.36-.26-.36-.36-.35-.46-.32-.59-.28-.73-.21-.88-.14-1.050-.05-1.23.06-1.22.16-1.04.24-.87.32-.71.36-.57.4-.44.42-.33.42-.24.4-.16.36-.1.32-.05.24-.01h.16l.06.01h8.16v-.83H6.18l-.01-2.75-.02-.37.05-.34.11-.31.17-.28.25-.26.31-.23.38-.2.44-.18.51-.15.58-.12.64-.1.71-.06.77-.04.84-.02 1.27.05zm-6.3 1.98l-.23.33-.08.41.08.41.23.34.33.22.41.09.41-.09.33-.22.23-.34.08-.41-.08-.41-.23-.33-.33-.22-.41-.09-.41.09zm13.090 3.95l.28.06.32.12.35.18.36.27.36.35.35.47.32.59.28.73.21.88.14 1.04.05 1.23-.06 1.23-.16 1.04-.24.86-.32.71-.36.57-.4.45-.42.33-.42.24-.4.16-.36.09-.32.05-.24.02-.16-.01h-8.22v.82h5.84l.01 2.76.02.36-.05.34-.11.31-.17.29-.25.25-.31.24-.38.2-.44.17-.51.15-.58.13-.64.09-.71.07-.77.04-.84.01-1.27-.04-1.07-.14-.9-.2-.73-.25-.59-.3-.45-.33-.34-.34-.25-.34-.16-.33-.1-.3-.04-.25-.02-.2.01-.13v-5.34l.05-.64.13-.54.21-.46.26-.38.3-.32.33-.24.35-.2.35-.14.33-.1.3-.06.26-.04.21-.02.13-.01h5.84l.69-.05.59-.14.5-.21.41-.28.33-.32.27-.35.2-.36.15-.36.1-.35.07-.32.04-.28.02-.21V6.07h2.09l.14.01zm-6.47 14.25l-.23.33-.08.41.08.41.23.33.33.23.41.08.41-.08.33-.23.23-.33.08-.41-.08-.41-.23-.33-.33-.23-.41-.08-.41.08z" fill="#519aba"/>
<text x="89.80" y="207.65" font-family="Liberation Sans" font-size="13.2" font-weight="normal" font-style="normal" fill="#cccccc" textLength="58.40" lengthAdjust="spacingAndGlyphs" style="white-space:pre">gemini.py</text>
<path transform="translate(71.20,219.66) scale(0.4583)" d="M14.25.18l.9.2.73.26.59.3.45.32.34.34.25.34.16.33.1.3.04.26.02.2-.01.13V8.5l-.05.63-.13.55-.21.46-.26.38-.3.31-.33.25-.35.19-.35.14-.33.1-.3.07-.26.04-.21.02H8.77l-.69.05-.59.14-.5.22-.41.27-.33.32-.27.35-.2.36-.15.37-.1.35-.07.32-.04.27-.02.21v3.06H3.17l-.21-.03-.28-.07-.32-.12-.35-.18-.36-.26-.36-.36-.35-.46-.32-.59-.28-.73-.21-.88-.14-1.050-.05-1.23.06-1.22.16-1.04.24-.87.32-.71.36-.57.4-.44.42-.33.42-.24.4-.16.36-.1.32-.05.24-.01h.16l.06.01h8.16v-.83H6.18l-.01-2.75-.02-.37.05-.34.11-.31.17-.28.25-.26.31-.23.38-.2.44-.18.51-.15.58-.12.64-.1.71-.06.77-.04.84-.02 1.27.05zm-6.3 1.98l-.23.33-.08.41.08.41.23.34.33.22.41.09.41-.09.33-.22.23-.34.08-.41-.08-.41-.23-.33-.33-.22-.41-.09-.41.09zm13.090 3.95l.28.06.32.12.35.18.36.27.36.35.35.47.32.59.28.73.21.88.14 1.04.05 1.23-.06 1.23-.16 1.04-.24.86-.32.71-.36.57-.4.45-.42.33-.42.24-.4.16-.36.09-.32.05-.24.02-.16-.01h-8.22v.82h5.84l.01 2.76.02.36-.05.34-.11.31-.17.29-.25.25-.31.24-.38.2-.44.17-.51.15-.58.13-.64.09-.71.07-.77.04-.84.01-1.27-.04-1.07-.14-.9-.2-.73-.25-.59-.3-.45-.33-.34-.34-.25-.34-.16-.33-.1-.3-.04-.25-.02-.2.01-.13v-5.34l.05-.64.13-.54.21-.46.26-.38.3-.32.33-.24.35-.2.35-.14.33-.1.3-.06.26-.04.21-.02.13-.01h5.84l.69-.05.59-.14.5-.21.41-.28.33-.32.27-.35.2-.36.15-.36.1-.35.07-.32.04-.28.02-.21V6.07h2.09l.14.01zm-6.47 14.25l-.23.33-.08.41.08.41.23.33.33.23.41.08.41-.08.33-.23.23-.33.08-.41-.08-.41-.23-.33-.33-.23-.41-.08-.41.08z" fill="#519aba"/>
<text x="89.80" y="230.56" font-family="Liberation Sans" font-size="13.2" font-weight="normal" font-style="normal" fill="#cccccc" textLength="173.42" lengthAdjust="spacingAndGlyphs" style="white-space:pre">health_suggestion_resolve.py</text>
<path transform="translate(71.20,242.58) scale(0.4583)" d="M14.25.18l.9.2.73.26.59.3.45.32.34.34.25.34.16.33.1.3.04.26.02.2-.01.13V8.5l-.05.63-.13.55-.21.46-.26.38-.3.31-.33.25-.35.19-.35.14-.33.1-.3.07-.26.04-.21.02H8.77l-.69.05-.59.14-.5.22-.41.27-.33.32-.27.35-.2.36-.15.37-.1.35-.07.32-.04.27-.02.21v3.06H3.17l-.21-.03-.28-.07-.32-.12-.35-.18-.36-.26-.36-.36-.35-.46-.32-.59-.28-.73-.21-.88-.14-1.050-.05-1.23.06-1.22.16-1.04.24-.87.32-.71.36-.57.4-.44.42-.33.42-.24.4-.16.36-.1.32-.05.24-.01h.16l.06.01h8.16v-.83H6.18l-.01-2.75-.02-.37.05-.34.11-.31.17-.28.25-.26.31-.23.38-.2.44-.18.51-.15.58-.12.64-.1.71-.06.77-.04.84-.02 1.27.05zm-6.3 1.98l-.23.33-.08.41.08.41.23.34.33.22.41.09.41-.09.33-.22.23-.34.08-.41-.08-.41-.23-.33-.33-.22-.41-.09-.41.09zm13.090 3.95l.28.06.32.12.35.18.36.27.36.35.35.47.32.59.28.73.21.88.14 1.04.05 1.23-.06 1.23-.16 1.04-.24.86-.32.71-.36.57-.4.45-.42.33-.42.24-.4.16-.36.09-.32.05-.24.02-.16-.01h-8.22v.82h5.84l.01 2.76.02.36-.05.34-.11.31-.17.29-.25.25-.31.24-.38.2-.44.17-.51.15-.58.13-.64.09-.71.07-.77.04-.84.01-1.27-.04-1.07-.14-.9-.2-.73-.25-.59-.3-.45-.33-.34-.34-.25-.34-.16-.33-.1-.3-.04-.25-.02-.2.01-.13v-5.34l.05-.64.13-.54.21-.46.26-.38.3-.32.33-.24.35-.2.35-.14.33-.1.3-.06.26-.04.21-.02.13-.01h5.84l.69-.05.59-.14.5-.21.41-.28.33-.32.27-.35.2-.36.15-.36.1-.35.07-.32.04-.28.02-.21V6.07h2.09l.14.01zm-6.47 14.25l-.23.33-.08.41.08.41.23.33.33.23.41.08.41-.08.33-.23.23-.33.08-.41-.08-.41-.23-.33-.33-.23-.41-.08-.41.08z" fill="#519aba"/>
<text x="89.80" y="253.48" font-family="Liberation Sans" font-size="13.2" font-weight="normal" font-style="normal" fill="#cccccc" textLength="106.89" lengthAdjust="spacingAndGlyphs" style="white-space:pre">hydration_map.py</text>
<path transform="translate(71.20,265.50) scale(0.4583)" d="M14.25.18l.9.2.73.26.59.3.45.32.34.34.25.34.16.33.1.3.04.26.02.2-.01.13V8.5l-.05.63-.13.55-.21.46-.26.38-.3.31-.33.25-.35.19-.35.14-.33.1-.3.07-.26.04-.21.02H8.77l-.69.05-.59.14-.5.22-.41.27-.33.32-.27.35-.2.36-.15.37-.1.35-.07.32-.04.27-.02.21v3.06H3.17l-.21-.03-.28-.07-.32-.12-.35-.18-.36-.26-.36-.36-.35-.46-.32-.59-.28-.73-.21-.88-.14-1.050-.05-1.23.06-1.22.16-1.04.24-.87.32-.71.36-.57.4-.44.42-.33.42-.24.4-.16.36-.1.32-.05.24-.01h.16l.06.01h8.16v-.83H6.18l-.01-2.75-.02-.37.05-.34.11-.31.17-.28.25-.26.31-.23.38-.2.44-.18.51-.15.58-.12.64-.1.71-.06.77-.04.84-.02 1.27.05zm-6.3 1.98l-.23.33-.08.41.08.41.23.34.33.22.41.09.41-.09.33-.22.23-.34.08-.41-.08-.41-.23-.33-.33-.22-.41-.09-.41.09zm13.090 3.95l.28.06.32.12.35.18.36.27.36.35.35.47.32.59.28.73.21.88.14 1.04.05 1.23-.06 1.23-.16 1.04-.24.86-.32.71-.36.57-.4.45-.42.33-.42.24-.4.16-.36.09-.32.05-.24.02-.16-.01h-8.22v.82h5.84l.01 2.76.02.36-.05.34-.11.31-.17.29-.25.25-.31.24-.38.2-.44.17-.51.15-.58.13-.64.09-.71.07-.77.04-.84.01-1.27-.04-1.07-.14-.9-.2-.73-.25-.59-.3-.45-.33-.34-.34-.25-.34-.16-.33-.1-.3-.04-.25-.02-.2.01-.13v-5.34l.05-.64.13-.54.21-.46.26-.38.3-.32.33-.24.35-.2.35-.14.33-.1.3-.06.26-.04.21-.02.13-.01h5.84l.69-.05.59-.14.5-.21.41-.28.33-.32.27-.35.2-.36.15-.36.1-.35.07-.32.04-.28.02-.21V6.07h2.09l.14.01zm-6.47 14.25l-.23.33-.08.41.08.41.23.33.33.23.41.08.41-.08.33-.23.23-.33.08-.41-.08-.41-.23-.33-.33-.23-.41-.08-.41.08z" fill="#519aba"/>
<text x="89.80" y="276.40" font-family="Liberation Sans" font-size="13.2" font-weight="normal" font-style="normal" fill="#cccccc" textLength="120.92" lengthAdjust="spacingAndGlyphs" style="white-space:pre">hydration_service.py</text>
<path transform="translate(71.20,288.41) scale(0.4583)" d="M14.25.18l.9.2.73.26.59.3.45.32.34.34.25.34.16.33.1.3.04.26.02.2-.01.13V8.5l-.05.63-.13.55-.21.46-.26.38-.3.31-.33.25-.35.19-.35.14-.33.1-.3.07-.26.04-.21.02H8.77l-.69.05-.59.14-.5.22-.41.27-.33.32-.27.35-.2.36-.15.37-.1.35-.07.32-.04.27-.02.21v3.06H3.17l-.21-.03-.28-.07-.32-.12-.35-.18-.36-.26-.36-.36-.35-.46-.32-.59-.28-.73-.21-.88-.14-1.050-.05-1.23.06-1.22.16-1.04.24-.87.32-.71.36-.57.4-.44.42-.33.42-.24.4-.16.36-.1.32-.05.24-.01h.16l.06.01h8.16v-.83H6.18l-.01-2.75-.02-.37.05-.34.11-.31.17-.28.25-.26.31-.23.38-.2.44-.18.51-.15.58-.12.64-.1.71-.06.77-.04.84-.02 1.27.05zm-6.3 1.98l-.23.33-.08.41.08.41.23.34.33.22.41.09.41-.09.33-.22.23-.34.08-.41-.08-.41-.23-.33-.33-.22-.41-.09-.41.09zm13.090 3.95l.28.06.32.12.35.18.36.27.36.35.35.47.32.59.28.73.21.88.14 1.04.05 1.23-.06 1.23-.16 1.04-.24.86-.32.71-.36.57-.4.45-.42.33-.42.24-.4.16-.36.09-.32.05-.24.02-.16-.01h-8.22v.82h5.84l.01 2.76.02.36-.05.34-.11.31-.17.29-.25.25-.31.24-.38.2-.44.17-.51.15-.58.13-.64.09-.71.07-.77.04-.84.01-1.27-.04-1.07-.14-.9-.2-.73-.25-.59-.3-.45-.33-.34-.34-.25-.34-.16-.33-.1-.3-.04-.25-.02-.2.01-.13v-5.34l.05-.64.13-.54.21-.46.26-.38.3-.32.33-.24.35-.2.35-.14.33-.1.3-.06.26-.04.21-.02.13-.01h5.84l.69-.05.59-.14.5-.21.41-.28.33-.32.27-.35.2-.36.15-.36.1-.35.07-.32.04-.28.02-.21V6.07h2.09l.14.01zm-6.47 14.25l-.23.33-.08.41.08.41.23.33.33.23.41.08.41-.08.33-.23.23-.33.08-.41-.08-.41-.23-.33-.33-.23-.41-.08-.41.08z" fill="#519aba"/>
<text x="89.80" y="299.31" font-family="Liberation Sans" font-size="13.2" font-weight="normal" font-style="normal" fill="#cccccc" textLength="116.42" lengthAdjust="spacingAndGlyphs" style="white-space:pre">hydration_target.py</text>
<path transform="translate(71.20,311.33) scale(0.4583)" d="M14.25.18l.9.2.73.26.59.3.45.32.34.34.25.34.16.33.1.3.04.26.02.2-.01.13V8.5l-.05.63-.13.55-.21.46-.26.38-.3.31-.33.25-.35.19-.35.14-.33.1-.3.07-.26.04-.21.02H8.77l-.69.05-.59.14-.5.22-.41.27-.33.32-.27.35-.2.36-.15.37-.1.35-.07.32-.04.27-.02.21v3.06H3.17l-.21-.03-.28-.07-.32-.12-.35-.18-.36-.26-.36-.36-.35-.46-.32-.59-.28-.73-.21-.88-.14-1.050-.05-1.23.06-1.22.16-1.04.24-.87.32-.71.36-.57.4-.44.42-.33.42-.24.4-.16.36-.1.32-.05.24-.01h.16l.06.01h8.16v-.83H6.18l-.01-2.75-.02-.37.05-.34.11-.31.17-.28.25-.26.31-.23.38-.2.44-.18.51-.15.58-.12.64-.1.71-.06.77-.04.84-.02 1.27.05zm-6.3 1.98l-.23.33-.08.41.08.41.23.34.33.22.41.09.41-.09.33-.22.23-.34.08-.41-.08-.41-.23-.33-.33-.22-.41-.09-.41.09zm13.090 3.95l.28.06.32.12.35.18.36.27.36.35.35.47.32.59.28.73.21.88.14 1.04.05 1.23-.06 1.23-.16 1.04-.24.86-.32.71-.36.57-.4.45-.42.33-.42.24-.4.16-.36.09-.32.05-.24.02-.16-.01h-8.22v.82h5.84l.01 2.76.02.36-.05.34-.11.31-.17.29-.25.25-.31.24-.38.2-.44.17-.51.15-.58.13-.64.09-.71.07-.77.04-.84.01-1.27-.04-1.07-.14-.9-.2-.73-.25-.59-.3-.45-.33-.34-.34-.25-.34-.16-.33-.1-.3-.04-.25-.02-.2.01-.13v-5.34l.05-.64.13-.54.21-.46.26-.38.3-.32.33-.24.35-.2.35-.14.33-.1.3-.06.26-.04.21-.02.13-.01h5.84l.69-.05.59-.14.5-.21.41-.28.33-.32.27-.35.2-.36.15-.36.1-.35.07-.32.04-.28.02-.21V6.07h2.09l.14.01zm-6.47 14.25l-.23.33-.08.41.08.41.23.33.33.23.41.08.41-.08.33-.23.23-.33.08-.41-.08-.41-.23-.33-.33-.23-.41-.08-.41.08z" fill="#519aba"/>
<text x="89.80" y="322.23" font-family="Liberation Sans" font-size="13.2" font-weight="normal" font-style="normal" fill="#cccccc" textLength="73.23" lengthAdjust="spacingAndGlyphs" style="white-space:pre">llm_client.py</text>
<path transform="translate(71.20,334.24) scale(0.4583)" d="M14.25.18l.9.2.73.26.59.3.45.32.34.34.25.34.16.33.1.3.04.26.02.2-.01.13V8.5l-.05.63-.13.55-.21.46-.26.38-.3.31-.33.25-.35.19-.35.14-.33.1-.3.07-.26.04-.21.02H8.77l-.69.05-.59.14-.5.22-.41.27-.33.32-.27.35-.2.36-.15.37-.1.35-.07.32-.04.27-.02.21v3.06H3.17l-.21-.03-.28-.07-.32-.12-.35-.18-.36-.26-.36-.36-.35-.46-.32-.59-.28-.73-.21-.88-.14-1.050-.05-1.23.06-1.22.16-1.04.24-.87.32-.71.36-.57.4-.44.42-.33.42-.24.4-.16.36-.1.32-.05.24-.01h.16l.06.01h8.16v-.83H6.18l-.01-2.75-.02-.37.05-.34.11-.31.17-.28.25-.26.31-.23.38-.2.44-.18.51-.15.58-.12.64-.1.71-.06.77-.04.84-.02 1.27.05zm-6.3 1.98l-.23.33-.08.41.08.41.23.34.33.22.41.09.41-.09.33-.22.23-.34.08-.41-.08-.41-.23-.33-.33-.22-.41-.09-.41.09zm13.090 3.95l.28.06.32.12.35.18.36.27.36.35.35.47.32.59.28.73.21.88.14 1.04.05 1.23-.06 1.23-.16 1.04-.24.86-.32.71-.36.57-.4.45-.42.33-.42.24-.4.16-.36.09-.32.05-.24.02-.16-.01h-8.22v.82h5.84l.01 2.76.02.36-.05.34-.11.31-.17.29-.25.25-.31.24-.38.2-.44.17-.51.15-.58.13-.64.09-.71.07-.77.04-.84.01-1.27-.04-1.07-.14-.9-.2-.73-.25-.59-.3-.45-.33-.34-.34-.25-.34-.16-.33-.1-.3-.04-.25-.02-.2.01-.13v-5.34l.05-.64.13-.54.21-.46.26-.38.3-.32.33-.24.35-.2.35-.14.33-.1.3-.06.26-.04.21-.02.13-.01h5.84l.69-.05.59-.14.5-.21.41-.28.33-.32.27-.35.2-.36.15-.36.1-.35.07-.32.04-.28.02-.21V6.07h2.09l.14.01zm-6.47 14.25l-.23.33-.08.41.08.41.23.33.33.23.41.08.41-.08.33-.23.23-.33.08-.41-.08-.41-.23-.33-.33-.23-.41-.08-.41.08z" fill="#519aba"/>
<text x="89.80" y="345.14" font-family="Liberation Sans" font-size="13.2" font-weight="normal" font-style="normal" fill="#cccccc" textLength="92.69" lengthAdjust="spacingAndGlyphs" style="white-space:pre">mongo_sync.py</text>
<path transform="translate(71.20,357.16) scale(0.4583)" d="M14.25.18l.9.2.73.26.59.3.45.32.34.34.25.34.16.33.1.3.04.26.02.2-.01.13V8.5l-.05.63-.13.55-.21.46-.26.38-.3.31-.33.25-.35.19-.35.14-.33.1-.3.07-.26.04-.21.02H8.77l-.69.05-.59.14-.5.22-.41.27-.33.32-.27.35-.2.36-.15.37-.1.35-.07.32-.04.27-.02.21v3.06H3.17l-.21-.03-.28-.07-.32-.12-.35-.18-.36-.26-.36-.36-.35-.46-.32-.59-.28-.73-.21-.88-.14-1.050-.05-1.23.06-1.22.16-1.04.24-.87.32-.71.36-.57.4-.44.42-.33.42-.24.4-.16.36-.1.32-.05.24-.01h.16l.06.01h8.16v-.83H6.18l-.01-2.75-.02-.37.05-.34.11-.31.17-.28.25-.26.31-.23.38-.2.44-.18.51-.15.58-.12.64-.1.71-.06.77-.04.84-.02 1.27.05zm-6.3 1.98l-.23.33-.08.41.08.41.23.34.33.22.41.09.41-.09.33-.22.23-.34.08-.41-.08-.41-.23-.33-.33-.22-.41-.09-.41.09zm13.090 3.95l.28.06.32.12.35.18.36.27.36.35.35.47.32.59.28.73.21.88.14 1.04.05 1.23-.06 1.23-.16 1.04-.24.86-.32.71-.36.57-.4.45-.42.33-.42.24-.4.16-.36.09-.32.05-.24.02-.16-.01h-8.22v.82h5.84l.01 2.76.02.36-.05.34-.11.31-.17.29-.25.25-.31.24-.38.2-.44.17-.51.15-.58.13-.64.09-.71.07-.77.04-.84.01-1.27-.04-1.07-.14-.9-.2-.73-.25-.59-.3-.45-.33-.34-.34-.25-.34-.16-.33-.1-.3-.04-.25-.02-.2.01-.13v-5.34l.05-.64.13-.54.21-.46.26-.38.3-.32.33-.24.35-.2.35-.14.33-.1.3-.06.26-.04.21-.02.13-.01h5.84l.69-.05.59-.14.5-.21.41-.28.33-.32.27-.35.2-.36.15-.36.1-.35.07-.32.04-.28.02-.21V6.07h2.09l.14.01zm-6.47 14.25l-.23.33-.08.41.08.41.23.33.33.23.41.08.41-.08.33-.23.23-.33.08-.41-.08-.41-.23-.33-.33-.23-.41-.08-.41.08z" fill="#519aba"/>
<text x="89.80" y="368.06" font-family="Liberation Sans" font-size="13.2" font-weight="normal" font-style="normal" fill="#cccccc" textLength="60.22" lengthAdjust="spacingAndGlyphs" style="white-space:pre">mongo.py</text>
<path transform="translate(71.20,380.08) scale(0.4583)" d="M14.25.18l.9.2.73.26.59.3.45.32.34.34.25.34.16.33.1.3.04.26.02.2-.01.13V8.5l-.05.63-.13.55-.21.46-.26.38-.3.31-.33.25-.35.19-.35.14-.33.1-.3.07-.26.04-.21.02H8.77l-.69.05-.59.14-.5.22-.41.27-.33.32-.27.35-.2.36-.15.37-.1.35-.07.32-.04.27-.02.21v3.06H3.17l-.21-.03-.28-.07-.32-.12-.35-.18-.36-.26-.36-.36-.35-.46-.32-.59-.28-.73-.21-.88-.14-1.050-.05-1.23.06-1.22.16-1.04.24-.87.32-.71.36-.57.4-.44.42-.33.42-.24.4-.16.36-.1.32-.05.24-.01h.16l.06.01h8.16v-.83H6.18l-.01-2.75-.02-.37.05-.34.11-.31.17-.28.25-.26.31-.23.38-.2.44-.18.51-.15.58-.12.64-.1.71-.06.77-.04.84-.02 1.27.05zm-6.3 1.98l-.23.33-.08.41.08.41.23.34.33.22.41.09.41-.09.33-.22.23-.34.08-.41-.08-.41-.23-.33-.33-.22-.41-.09-.41.09zm13.090 3.95l.28.06.32.12.35.18.36.27.36.35.35.47.32.59.28.73.21.88.14 1.04.05 1.23-.06 1.23-.16 1.04-.24.86-.32.71-.36.57-.4.45-.42.33-.42.24-.4.16-.36.09-.32.05-.24.02-.16-.01h-8.22v.82h5.84l.01 2.76.02.36-.05.34-.11.31-.17.29-.25.25-.31.24-.38.2-.44.17-.51.15-.58.13-.64.09-.71.07-.77.04-.84.01-1.27-.04-1.07-.14-.9-.2-.73-.25-.59-.3-.45-.33-.34-.34-.25-.34-.16-.33-.1-.3-.04-.25-.02-.2.01-.13v-5.34l.05-.64.13-.54.21-.46.26-.38.3-.32.33-.24.35-.2.35-.14.33-.1.3-.06.26-.04.21-.02.13-.01h5.84l.69-.05.59-.14.5-.21.41-.28.33-.32.27-.35.2-.36.15-.36.1-.35.07-.32.04-.28.02-.21V6.07h2.09l.14.01zm-6.47 14.25l-.23.33-.08.41.08.41.23.33.33.23.41.08.41-.08.33-.23.23-.33.08-.41-.08-.41-.23-.33-.33-.23-.41-.08-.41.08z" fill="#519aba"/>
<text x="89.80" y="390.98" font-family="Liberation Sans" font-size="13.2" font-weight="normal" font-style="normal" fill="#cccccc" textLength="123.17" lengthAdjust="spacingAndGlyphs" style="white-space:pre">monthly_calendar.py</text>
<path transform="translate(71.20,402.99) scale(0.4583)" d="M14.25.18l.9.2.73.26.59.3.45.32.34.34.25.34.16.33.1.3.04.26.02.2-.01.13V8.5l-.05.63-.13.55-.21.46-.26.38-.3.31-.33.25-.35.19-.35.14-.33.1-.3.07-.26.04-.21.02H8.77l-.69.05-.59.14-.5.22-.41.27-.33.32-.27.35-.2.36-.15.37-.1.35-.07.32-.04.27-.02.21v3.06H3.17l-.21-.03-.28-.07-.32-.12-.35-.18-.36-.26-.36-.36-.35-.46-.32-.59-.28-.73-.21-.88-.14-1.050-.05-1.23.06-1.22.16-1.04.24-.87.32-.71.36-.57.4-.44.42-.33.42-.24.4-.16.36-.1.32-.05.24-.01h.16l.06.01h8.16v-.83H6.18l-.01-2.75-.02-.37.05-.34.11-.31.17-.28.25-.26.31-.23.38-.2.44-.18.51-.15.58-.12.64-.1.71-.06.77-.04.84-.02 1.27.05zm-6.3 1.98l-.23.33-.08.41.08.41.23.34.33.22.41.09.41-.09.33-.22.23-.34.08-.41-.08-.41-.23-.33-.33-.22-.41-.09-.41.09zm13.090 3.95l.28.06.32.12.35.18.36.27.36.35.35.47.32.59.28.73.21.88.14 1.04.05 1.23-.06 1.23-.16 1.04-.24.86-.32.71-.36.57-.4.45-.42.33-.42.24-.4.16-.36.09-.32.05-.24.02-.16-.01h-8.22v.82h5.84l.01 2.76.02.36-.05.34-.11.31-.17.29-.25.25-.31.24-.38.2-.44.17-.51.15-.58.13-.64.09-.71.07-.77.04-.84.01-1.27-.04-1.07-.14-.9-.2-.73-.25-.59-.3-.45-.33-.34-.34-.25-.34-.16-.33-.1-.3-.04-.25-.02-.2.01-.13v-5.34l.05-.64.13-.54.21-.46.26-.38.3-.32.33-.24.35-.2.35-.14.33-.1.3-.06.26-.04.21-.02.13-.01h5.84l.69-.05.59-.14.5-.21.41-.28.33-.32.27-.35.2-.36.15-.36.1-.35.07-.32.04-.28.02-.21V6.07h2.09l.14.01zm-6.47 14.25l-.23.33-.08.41.08.41.23.33.33.23.41.08.41-.08.33-.23.23-.33.08-.41-.08-.41-.23-.33-.33-.23-.41-.08-.41.08z" fill="#519aba"/>
<text x="89.80" y="413.89" font-family="Liberation Sans" font-size="13.2" font-weight="normal" font-style="normal" fill="#cccccc" textLength="90.70" lengthAdjust="spacingAndGlyphs" style="white-space:pre">notifications.py</text>
<path transform="translate(71.20,425.91) scale(0.4583)" d="M14.25.18l.9.2.73.26.59.3.45.32.34.34.25.34.16.33.1.3.04.26.02.2-.01.13V8.5l-.05.63-.13.55-.21.46-.26.38-.3.31-.33.25-.35.19-.35.14-.33.1-.3.07-.26.04-.21.02H8.77l-.69.05-.59.14-.5.22-.41.27-.33.32-.27.35-.2.36-.15.37-.1.35-.07.32-.04.27-.02.21v3.06H3.17l-.21-.03-.28-.07-.32-.12-.35-.18-.36-.26-.36-.36-.35-.46-.32-.59-.28-.73-.21-.88-.14-1.050-.05-1.23.06-1.22.16-1.04.24-.87.32-.71.36-.57.4-.44.42-.33.42-.24.4-.16.36-.1.32-.05.24-.01h.16l.06.01h8.16v-.83H6.18l-.01-2.75-.02-.37.05-.34.11-.31.17-.28.25-.26.31-.23.38-.2.44-.18.51-.15.58-.12.64-.1.71-.06.77-.04.84-.02 1.27.05zm-6.3 1.98l-.23.33-.08.41.08.41.23.34.33.22.41.09.41-.09.33-.22.23-.34.08-.41-.08-.41-.23-.33-.33-.22-.41-.09-.41.09zm13.090 3.95l.28.06.32.12.35.18.36.27.36.35.35.47.32.59.28.73.21.88.14 1.04.05 1.23-.06 1.23-.16 1.04-.24.86-.32.71-.36.57-.4.45-.42.33-.42.24-.4.16-.36.09-.32.05-.24.02-.16-.01h-8.22v.82h5.84l.01 2.76.02.36-.05.34-.11.31-.17.29-.25.25-.31.24-.38.2-.44.17-.51.15-.58.13-.64.09-.71.07-.77.04-.84.01-1.27-.04-1.07-.14-.9-.2-.73-.25-.59-.3-.45-.33-.34-.34-.25-.34-.16-.33-.1-.3-.04-.25-.02-.2.01-.13v-5.34l.05-.64.13-.54.21-.46.26-.38.3-.32.33-.24.35-.2.35-.14.33-.1.3-.06.26-.04.21-.02.13-.01h5.84l.69-.05.59-.14.5-.21.41-.28.33-.32.27-.35.2-.36.15-.36.1-.35.07-.32.04-.28.02-.21V6.07h2.09l.14.01zm-6.47 14.25l-.23.33-.08.41.08.41.23.33.33.23.41.08.41-.08.33-.23.23-.33.08-.41-.08-.41-.23-.33-.33-.23-.41-.08-.41.08z" fill="#519aba"/>
<text x="89.80" y="436.81" font-family="Liberation Sans" font-size="13.2" font-weight="normal" font-style="normal" fill="#cccccc" textLength="84.42" lengthAdjust="spacingAndGlyphs" style="white-space:pre">nutrition_ai.py</text>
<path transform="translate(71.20,448.82) scale(0.4583)" d="M14.25.18l.9.2.73.26.59.3.45.32.34.34.25.34.16.33.1.3.04.26.02.2-.01.13V8.5l-.05.63-.13.55-.21.46-.26.38-.3.31-.33.25-.35.19-.35.14-.33.1-.3.07-.26.04-.21.02H8.77l-.69.05-.59.14-.5.22-.41.27-.33.32-.27.35-.2.36-.15.37-.1.35-.07.32-.04.27-.02.21v3.06H3.17l-.21-.03-.28-.07-.32-.12-.35-.18-.36-.26-.36-.36-.35-.46-.32-.59-.28-.73-.21-.88-.14-1.050-.05-1.23.06-1.22.16-1.04.24-.87.32-.71.36-.57.4-.44.42-.33.42-.24.4-.16.36-.1.32-.05.24-.01h.16l.06.01h8.16v-.83H6.18l-.01-2.75-.02-.37.05-.34.11-.31.17-.28.25-.26.31-.23.38-.2.44-.18.51-.15.58-.12.64-.1.71-.06.77-.04.84-.02 1.27.05zm-6.3 1.98l-.23.33-.08.41.08.41.23.34.33.22.41.09.41-.09.33-.22.23-.34.08-.41-.08-.41-.23-.33-.33-.22-.41-.09-.41.09zm13.090 3.95l.28.06.32.12.35.18.36.27.36.35.35.47.32.59.28.73.21.88.14 1.04.05 1.23-.06 1.23-.16 1.04-.24.86-.32.71-.36.57-.4.45-.42.33-.42.24-.4.16-.36.09-.32.05-.24.02-.16-.01h-8.22v.82h5.84l.01 2.76.02.36-.05.34-.11.31-.17.29-.25.25-.31.24-.38.2-.44.17-.51.15-.58.13-.64.09-.71.07-.77.04-.84.01-1.27-.04-1.07-.14-.9-.2-.73-.25-.59-.3-.45-.33-.34-.34-.25-.34-.16-.33-.1-.3-.04-.25-.02-.2.01-.13v-5.34l.05-.64.13-.54.21-.46.26-.38.3-.32.33-.24.35-.2.35-.14.33-.1.3-.06.26-.04.21-.02.13-.01h5.84l.69-.05.59-.14.5-.21.41-.28.33-.32.27-.35.2-.36.15-.36.1-.35.07-.32.04-.28.02-.21V6.07h2.09l.14.01zm-6.47 14.25l-.23.33-.08.41.08.41.23.33.33.23.41.08.41-.08.33-.23.23-.33.08-.41-.08-.41-.23-.33-.33-.23-.41-.08-.41.08z" fill="#519aba"/>
<text x="89.80" y="459.72" font-family="Liberation Sans" font-size="13.2" font-weight="normal" font-style="normal" fill="#cccccc" textLength="154.70" lengthAdjust="spacingAndGlyphs" style="white-space:pre">nutrition_cache_service.py</text>
<path transform="translate(71.20,471.74) scale(0.4583)" d="M14.25.18l.9.2.73.26.59.3.45.32.34.34.25.34.16.33.1.3.04.26.02.2-.01.13V8.5l-.05.63-.13.55-.21.46-.26.38-.3.31-.33.25-.35.19-.35.14-.33.1-.3.07-.26.04-.21.02H8.77l-.69.05-.59.14-.5.22-.41.27-.33.32-.27.35-.2.36-.15.37-.1.35-.07.32-.04.27-.02.21v3.06H3.17l-.21-.03-.28-.07-.32-.12-.35-.18-.36-.26-.36-.36-.35-.46-.32-.59-.28-.73-.21-.88-.14-1.050-.05-1.23.06-1.22.16-1.04.24-.87.32-.71.36-.57.4-.44.42-.33.42-.24.4-.16.36-.1.32-.05.24-.01h.16l.06.01h8.16v-.83H6.18l-.01-2.75-.02-.37.05-.34.11-.31.17-.28.25-.26.31-.23.38-.2.44-.18.51-.15.58-.12.64-.1.71-.06.77-.04.84-.02 1.27.05zm-6.3 1.98l-.23.33-.08.41.08.41.23.34.33.22.41.09.41-.09.33-.22.23-.34.08-.41-.08-.41-.23-.33-.33-.22-.41-.09-.41.09zm13.090 3.95l.28.06.32.12.35.18.36.27.36.35.35.47.32.59.28.73.21.88.14 1.04.05 1.23-.06 1.23-.16 1.04-.24.86-.32.71-.36.57-.4.45-.42.33-.42.24-.4.16-.36.09-.32.05-.24.02-.16-.01h-8.22v.82h5.84l.01 2.76.02.36-.05.34-.11.31-.17.29-.25.25-.31.24-.38.2-.44.17-.51.15-.58.13-.64.09-.71.07-.77.04-.84.01-1.27-.04-1.07-.14-.9-.2-.73-.25-.59-.3-.45-.33-.34-.34-.25-.34-.16-.33-.1-.3-.04-.25-.02-.2.01-.13v-5.34l.05-.64.13-.54.21-.46.26-.38.3-.32.33-.24.35-.2.35-.14.33-.1.3-.06.26-.04.21-.02.13-.01h5.84l.69-.05.59-.14.5-.21.41-.28.33-.32.27-.35.2-.36.15-.36.1-.35.07-.32.04-.28.02-.21V6.07h2.09l.14.01zm-6.47 14.25l-.23.33-.08.41.08.41.23.33.33.23.41.08.41-.08.33-.23.23-.33.08-.41-.08-.41-.23-.33-.33-.23-.41-.08-.41.08z" fill="#519aba"/>
<text x="89.80" y="482.64" font-family="Liberation Sans" font-size="13.2" font-weight="normal" font-style="normal" fill="#cccccc" textLength="115.21" lengthAdjust="spacingAndGlyphs" style="white-space:pre">nutrition_engine.py</text>
<path transform="translate(71.20,494.66) scale(0.4583)" d="M14.25.18l.9.2.73.26.59.3.45.32.34.34.25.34.16.33.1.3.04.26.02.2-.01.13V8.5l-.05.63-.13.55-.21.46-.26.38-.3.31-.33.25-.35.19-.35.14-.33.1-.3.07-.26.04-.21.02H8.77l-.69.05-.59.14-.5.22-.41.27-.33.32-.27.35-.2.36-.15.37-.1.35-.07.32-.04.27-.02.21v3.06H3.17l-.21-.03-.28-.07-.32-.12-.35-.18-.36-.26-.36-.36-.35-.46-.32-.59-.28-.73-.21-.88-.14-1.050-.05-1.23.06-1.22.16-1.04.24-.87.32-.71.36-.57.4-.44.42-.33.42-.24.4-.16.36-.1.32-.05.24-.01h.16l.06.01h8.16v-.83H6.18l-.01-2.75-.02-.37.05-.34.11-.31.17-.28.25-.26.31-.23.38-.2.44-.18.51-.15.58-.12.64-.1.71-.06.77-.04.84-.02 1.27.05zm-6.3 1.98l-.23.33-.08.41.08.41.23.34.33.22.41.09.41-.09.33-.22.23-.34.08-.41-.08-.41-.23-.33-.33-.22-.41-.09-.41.09zm13.090 3.95l.28.06.32.12.35.18.36.27.36.35.35.47.32.59.28.73.21.88.14 1.04.05 1.23-.06 1.23-.16 1.04-.24.86-.32.71-.36.57-.4.45-.42.33-.42.24-.4.16-.36.09-.32.05-.24.02-.16-.01h-8.22v.82h5.84l.01 2.76.02.36-.05.34-.11.31-.17.29-.25.25-.31.24-.38.2-.44.17-.51.15-.58.13-.64.09-.71.07-.77.04-.84.01-1.27-.04-1.07-.14-.9-.2-.73-.25-.59-.3-.45-.33-.34-.34-.25-.34-.16-.33-.1-.3-.04-.25-.02-.2.01-.13v-5.34l.05-.64.13-.54.21-.46.26-.38.3-.32.33-.24.35-.2.35-.14.33-.1.3-.06.26-.04.21-.02.13-.01h5.84l.69-.05.59-.14.5-.21.41-.28.33-.32.27-.35.2-.36.15-.36.1-.35.07-.32.04-.28.02-.21V6.07h2.09l.14.01zm-6.47 14.25l-.23.33-.08.41.08.41.23.33.33.23.41.08.41-.08.33-.23.23-.33.08-.41-.08-.41-.23-.33-.33-.23-.41-.08-.41.08z" fill="#519aba"/>
<text x="89.80" y="505.56" font-family="Liberation Sans" font-size="13.2" font-weight="normal" font-style="normal" fill="#cccccc" textLength="161.92" lengthAdjust="spacingAndGlyphs" style="white-space:pre">nutrition_goal_modifiers.py</text>
<path transform="translate(71.20,517.57) scale(0.4583)" d="M14.25.18l.9.2.73.26.59.3.45.32.34.34.25.34.16.33.1.3.04.26.02.2-.01.13V8.5l-.05.63-.13.55-.21.46-.26.38-.3.31-.33.25-.35.19-.35.14-.33.1-.3.07-.26.04-.21.02H8.77l-.69.05-.59.14-.5.22-.41.27-.33.32-.27.35-.2.36-.15.37-.1.35-.07.32-.04.27-.02.21v3.06H3.17l-.21-.03-.28-.07-.32-.12-.35-.18-.36-.26-.36-.36-.35-.46-.32-.59-.28-.73-.21-.88-.14-1.050-.05-1.23.06-1.22.16-1.04.24-.87.32-.71.36-.57.4-.44.42-.33.42-.24.4-.16.36-.1.32-.05.24-.01h.16l.06.01h8.16v-.83H6.18l-.01-2.75-.02-.37.05-.34.11-.31.17-.28.25-.26.31-.23.38-.2.44-.18.51-.15.58-.12.64-.1.71-.06.77-.04.84-.02 1.27.05zm-6.3 1.98l-.23.33-.08.41.08.41.23.34.33.22.41.09.41-.09.33-.22.23-.34.08-.41-.08-.41-.23-.33-.33-.22-.41-.09-.41.09zm13.090 3.95l.28.06.32.12.35.18.36.27.36.35.35.47.32.59.28.73.21.88.14 1.04.05 1.23-.06 1.23-.16 1.04-.24.86-.32.71-.36.57-.4.45-.42.33-.42.24-.4.16-.36.09-.32.05-.24.02-.16-.01h-8.22v.82h5.84l.01 2.76.02.36-.05.34-.11.31-.17.29-.25.25-.31.24-.38.2-.44.17-.51.15-.58.13-.64.09-.71.07-.77.04-.84.01-1.27-.04-1.07-.14-.9-.2-.73-.25-.59-.3-.45-.33-.34-.34-.25-.34-.16-.33-.1-.3-.04-.25-.02-.2.01-.13v-5.34l.05-.64.13-.54.21-.46.26-.38.3-.32.33-.24.35-.2.35-.14.33-.1.3-.06.26-.04.21-.02.13-.01h5.84l.69-.05.59-.14.5-.21.41-.28.33-.32.27-.35.2-.36.15-.36.1-.35.07-.32.04-.28.02-.21V6.07h2.09l.14.01zm-6.47 14.25l-.23.33-.08.41.08.41.23.33.33.23.41.08.41-.08.33-.23.23-.33.08-.41-.08-.41-.23-.33-.33-.23-.41-.08-.41.08z" fill="#519aba"/>
<text x="89.80" y="528.47" font-family="Liberation Sans" font-size="13.2" font-weight="normal" font-style="normal" fill="#cccccc" textLength="100.88" lengthAdjust="spacingAndGlyphs" style="white-space:pre">nutrition_map.py</text>
<path transform="translate(71.20,540.49) scale(0.4583)" d="M14.25.18l.9.2.73.26.59.3.45.32.34.34.25.34.16.33.1.3.04.26.02.2-.01.13V8.5l-.05.63-.13.55-.21.46-.26.38-.3.31-.33.25-.35.19-.35.14-.33.1-.3.07-.26.04-.21.02H8.77l-.69.05-.59.14-.5.22-.41.27-.33.32-.27.35-.2.36-.15.37-.1.35-.07.32-.04.27-.02.21v3.06H3.17l-.21-.03-.28-.07-.32-.12-.35-.18-.36-.26-.36-.36-.35-.46-.32-.59-.28-.73-.21-.88-.14-1.050-.05-1.23.06-1.22.16-1.04.24-.87.32-.71.36-.57.4-.44.42-.33.42-.24.4-.16.36-.1.32-.05.24-.01h.16l.06.01h8.16v-.83H6.18l-.01-2.75-.02-.37.05-.34.11-.31.17-.28.25-.26.31-.23.38-.2.44-.18.51-.15.58-.12.64-.1.71-.06.77-.04.84-.02 1.27.05zm-6.3 1.98l-.23.33-.08.41.08.41.23.34.33.22.41.09.41-.09.33-.22.23-.34.08-.41-.08-.41-.23-.33-.33-.22-.41-.09-.41.09zm13.090 3.95l.28.06.32.12.35.18.36.27.36.35.35.47.32.59.28.73.21.88.14 1.04.05 1.23-.06 1.23-.16 1.04-.24.86-.32.71-.36.57-.4.45-.42.33-.42.24-.4.16-.36.09-.32.05-.24.02-.16-.01h-8.22v.82h5.84l.01 2.76.02.36-.05.34-.11.31-.17.29-.25.25-.31.24-.38.2-.44.17-.51.15-.58.13-.64.09-.71.07-.77.04-.84.01-1.27-.04-1.07-.14-.9-.2-.73-.25-.59-.3-.45-.33-.34-.34-.25-.34-.16-.33-.1-.3-.04-.25-.02-.2.01-.13v-5.34l.05-.64.13-.54.21-.46.26-.38.3-.32.33-.24.35-.2.35-.14.33-.1.3-.06.26-.04.21-.02.13-.01h5.84l.69-.05.59-.14.5-.21.41-.28.33-.32.27-.35.2-.36.15-.36.1-.35.07-.32.04-.28.02-.21V6.07h2.09l.14.01zm-6.47 14.25l-.23.33-.08.41.08.41.23.33.33.23.41.08.41-.08.33-.23.23-.33.08-.41-.08-.41-.23-.33-.33-.23-.41-.08-.41.08z" fill="#519aba"/>
<text x="89.80" y="551.39" font-family="Liberation Sans" font-size="13.2" font-weight="normal" font-style="normal" fill="#cccccc" textLength="153.89" lengthAdjust="spacingAndGlyphs" style="white-space:pre">nutrition_requirements.py</text>
<path transform="translate(71.20,563.40) scale(0.4583)" d="M14.25.18l.9.2.73.26.59.3.45.32.34.34.25.34.16.33.1.3.04.26.02.2-.01.13V8.5l-.05.63-.13.55-.21.46-.26.38-.3.31-.33.25-.35.19-.35.14-.33.1-.3.07-.26.04-.21.02H8.77l-.69.05-.59.14-.5.22-.41.27-.33.32-.27.35-.2.36-.15.37-.1.35-.07.32-.04.27-.02.21v3.06H3.17l-.21-.03-.28-.07-.32-.12-.35-.18-.36-.26-.36-.36-.35-.46-.32-.59-.28-.73-.21-.88-.14-1.050-.05-1.23.06-1.22.16-1.04.24-.87.32-.71.36-.57.4-.44.42-.33.42-.24.4-.16.36-.1.32-.05.24-.01h.16l.06.01h8.16v-.83H6.18l-.01-2.75-.02-.37.05-.34.11-.31.17-.28.25-.26.31-.23.38-.2.44-.18.51-.15.58-.12.64-.1.71-.06.77-.04.84-.02 1.27.05zm-6.3 1.98l-.23.33-.08.41.08.41.23.34.33.22.41.09.41-.09.33-.22.23-.34.08-.41-.08-.41-.23-.33-.33-.22-.41-.09-.41.09zm13.090 3.95l.28.06.32.12.35.18.36.27.36.35.35.47.32.59.28.73.21.88.14 1.04.05 1.23-.06 1.23-.16 1.04-.24.86-.32.71-.36.57-.4.45-.42.33-.42.24-.4.16-.36.09-.32.05-.24.02-.16-.01h-8.22v.82h5.84l.01 2.76.02.36-.05.34-.11.31-.17.29-.25.25-.31.24-.38.2-.44.17-.51.15-.58.13-.64.09-.71.07-.77.04-.84.01-1.27-.04-1.07-.14-.9-.2-.73-.25-.59-.3-.45-.33-.34-.34-.25-.34-.16-.33-.1-.3-.04-.25-.02-.2.01-.13v-5.34l.05-.64.13-.54.21-.46.26-.38.3-.32.33-.24.35-.2.35-.14.33-.1.3-.06.26-.04.21-.02.13-.01h5.84l.69-.05.59-.14.5-.21.41-.28.33-.32.27-.35.2-.36.15-.36.1-.35.07-.32.04-.28.02-.21V6.07h2.09l.14.01zm-6.47 14.25l-.23.33-.08.41.08.41.23.33.33.23.41.08.41-.08.33-.23.23-.33.08-.41-.08-.41-.23-.33-.33-.23-.41-.08-.41.08z" fill="#519aba"/>
<text x="89.80" y="574.30" font-family="Liberation Sans" font-size="13.2" font-weight="normal" font-style="normal" fill="#cccccc" textLength="114.71" lengthAdjust="spacingAndGlyphs" style="white-space:pre">nutrition_service.py</text>
<path transform="translate(71.20,586.32) scale(0.4583)" d="M14.25.18l.9.2.73.26.59.3.45.32.34.34.25.34.16.33.1.3.04.26.02.2-.01.13V8.5l-.05.63-.13.55-.21.46-.26.38-.3.31-.33.25-.35.19-.35.14-.33.1-.3.07-.26.04-.21.02H8.77l-.69.05-.59.14-.5.22-.41.27-.33.32-.27.35-.2.36-.15.37-.1.35-.07.32-.04.27-.02.21v3.06H3.17l-.21-.03-.28-.07-.32-.12-.35-.18-.36-.26-.36-.36-.35-.46-.32-.59-.28-.73-.21-.88-.14-1.050-.05-1.23.06-1.22.16-1.04.24-.87.32-.71.36-.57.4-.44.42-.33.42-.24.4-.16.36-.1.32-.05.24-.01h.16l.06.01h8.16v-.83H6.18l-.01-2.75-.02-.37.05-.34.11-.31.17-.28.25-.26.31-.23.38-.2.44-.18.51-.15.58-.12.64-.1.71-.06.77-.04.84-.02 1.27.05zm-6.3 1.98l-.23.33-.08.41.08.41.23.34.33.22.41.09.41-.09.33-.22.23-.34.08-.41-.08-.41-.23-.33-.33-.22-.41-.09-.41.09zm13.090 3.95l.28.06.32.12.35.18.36.27.36.35.35.47.32.59.28.73.21.88.14 1.04.05 1.23-.06 1.23-.16 1.04-.24.86-.32.71-.36.57-.4.45-.42.33-.42.24-.4.16-.36.09-.32.05-.24.02-.16-.01h-8.22v.82h5.84l.01 2.76.02.36-.05.34-.11.31-.17.29-.25.25-.31.24-.38.2-.44.17-.51.15-.58.13-.64.09-.71.07-.77.04-.84.01-1.27-.04-1.07-.14-.9-.2-.73-.25-.59-.3-.45-.33-.34-.34-.25-.34-.16-.33-.1-.3-.04-.25-.02-.2.01-.13v-5.34l.05-.64.13-.54.21-.46.26-.38.3-.32.33-.24.35-.2.35-.14.33-.1.3-.06.26-.04.21-.02.13-.01h5.84l.69-.05.59-.14.5-.21.41-.28.33-.32.27-.35.2-.36.15-.36.1-.35.07-.32.04-.28.02-.21V6.07h2.09l.14.01zm-6.47 14.25l-.23.33-.08.41.08.41.23.33.33.23.41.08.41-.08.33-.23.23-.33.08-.41-.08-.41-.23-.33-.33-.23-.41-.08-.41.08z" fill="#519aba"/>
<text x="89.80" y="597.22" font-family="Liberation Sans" font-size="13.2" font-weight="normal" font-style="normal" fill="#cccccc" textLength="92.69" lengthAdjust="spacingAndGlyphs" style="white-space:pre">photos_repo.py</text>
<path transform="translate(71.20,609.24) scale(0.4583)" d="M14.25.18l.9.2.73.26.59.3.45.32.34.34.25.34.16.33.1.3.04.26.02.2-.01.13V8.5l-.05.63-.13.55-.21.46-.26.38-.3.31-.33.25-.35.19-.35.14-.33.1-.3.07-.26.04-.21.02H8.77l-.69.05-.59.14-.5.22-.41.27-.33.32-.27.35-.2.36-.15.37-.1.35-.07.32-.04.27-.02.21v3.06H3.17l-.21-.03-.28-.07-.32-.12-.35-.18-.36-.26-.36-.36-.35-.46-.32-.59-.28-.73-.21-.88-.14-1.050-.05-1.23.06-1.22.16-1.04.24-.87.32-.71.36-.57.4-.44.42-.33.42-.24.4-.16.36-.1.32-.05.24-.01h.16l.06.01h8.16v-.83H6.18l-.01-2.75-.02-.37.05-.34.11-.31.17-.28.25-.26.31-.23.38-.2.44-.18.51-.15.58-.12.64-.1.71-.06.77-.04.84-.02 1.27.05zm-6.3 1.98l-.23.33-.08.41.08.41.23.34.33.22.41.09.41-.09.33-.22.23-.34.08-.41-.08-.41-.23-.33-.33-.22-.41-.09-.41.09zm13.090 3.95l.28.06.32.12.35.18.36.27.36.35.35.47.32.59.28.73.21.88.14 1.04.05 1.23-.06 1.23-.16 1.04-.24.86-.32.71-.36.57-.4.45-.42.33-.42.24-.4.16-.36.09-.32.05-.24.02-.16-.01h-8.22v.82h5.84l.01 2.76.02.36-.05.34-.11.31-.17.29-.25.25-.31.24-.38.2-.44.17-.51.15-.58.13-.64.09-.71.07-.77.04-.84.01-1.27-.04-1.07-.14-.9-.2-.73-.25-.59-.3-.45-.33-.34-.34-.25-.34-.16-.33-.1-.3-.04-.25-.02-.2.01-.13v-5.34l.05-.64.13-.54.21-.46.26-.38.3-.32.33-.24.35-.2.35-.14.33-.1.3-.06.26-.04.21-.02.13-.01h5.84l.69-.05.59-.14.5-.21.41-.28.33-.32.27-.35.2-.36.15-.36.1-.35.07-.32.04-.28.02-.21V6.07h2.09l.14.01zm-6.47 14.25l-.23.33-.08.41.08.41.23.33.33.23.41.08.41-.08.33-.23.23-.33.08-.41-.08-.41-.23-.33-.33-.23-.41-.08-.41.08z" fill="#519aba"/>
<text x="89.80" y="620.14" font-family="Liberation Sans" font-size="13.2" font-weight="normal" font-style="normal" fill="#ffffff" textLength="110.19" lengthAdjust="spacingAndGlyphs" style="white-space:pre">pinecone_client.py</text>
<path transform="translate(71.20,632.15) scale(0.4583)" d="M14.25.18l.9.2.73.26.59.3.45.32.34.34.25.34.16.33.1.3.04.26.02.2-.01.13V8.5l-.05.63-.13.55-.21.46-.26.38-.3.31-.33.25-.35.19-.35.14-.33.1-.3.07-.26.04-.21.02H8.77l-.69.05-.59.14-.5.22-.41.27-.33.32-.27.35-.2.36-.15.37-.1.35-.07.32-.04.27-.02.21v3.06H3.17l-.21-.03-.28-.07-.32-.12-.35-.18-.36-.26-.36-.36-.35-.46-.32-.59-.28-.73-.21-.88-.14-1.050-.05-1.23.06-1.22.16-1.04.24-.87.32-.71.36-.57.4-.44.42-.33.42-.24.4-.16.36-.1.32-.05.24-.01h.16l.06.01h8.16v-.83H6.18l-.01-2.75-.02-.37.05-.34.11-.31.17-.28.25-.26.31-.23.38-.2.44-.18.51-.15.58-.12.64-.1.71-.06.77-.04.84-.02 1.27.05zm-6.3 1.98l-.23.33-.08.41.08.41.23.34.33.22.41.09.41-.09.33-.22.23-.34.08-.41-.08-.41-.23-.33-.33-.22-.41-.09-.41.09zm13.090 3.95l.28.06.32.12.35.18.36.27.36.35.35.47.32.59.28.73.21.88.14 1.04.05 1.23-.06 1.23-.16 1.04-.24.86-.32.71-.36.57-.4.45-.42.33-.42.24-.4.16-.36.09-.32.05-.24.02-.16-.01h-8.22v.82h5.84l.01 2.76.02.36-.05.34-.11.31-.17.29-.25.25-.31.24-.38.2-.44.17-.51.15-.58.13-.64.09-.71.07-.77.04-.84.01-1.27-.04-1.07-.14-.9-.2-.73-.25-.59-.3-.45-.33-.34-.34-.25-.34-.16-.33-.1-.3-.04-.25-.02-.2.01-.13v-5.34l.05-.64.13-.54.21-.46.26-.38.3-.32.33-.24.35-.2.35-.14.33-.1.3-.06.26-.04.21-.02.13-.01h5.84l.69-.05.59-.14.5-.21.41-.28.33-.32.27-.35.2-.36.15-.36.1-.35.07-.32.04-.28.02-.21V6.07h2.09l.14.01zm-6.47 14.25l-.23.33-.08.41.08.41.23.33.33.23.41.08.41-.08.33-.23.23-.33.08-.41-.08-.41-.23-.33-.33-.23-.41-.08-.41.08z" fill="#519aba"/>
<text x="89.80" y="643.05" font-family="Liberation Sans" font-size="13.2" font-weight="normal" font-style="normal" fill="#cccccc" textLength="159.43" lengthAdjust="spacingAndGlyphs" style="white-space:pre">recommendation_cache.py</text>
<path transform="translate(71.20,655.07) scale(0.4583)" d="M14.25.18l.9.2.73.26.59.3.45.32.34.34.25.34.16.33.1.3.04.26.02.2-.01.13V8.5l-.05.63-.13.55-.21.46-.26.38-.3.31-.33.25-.35.19-.35.14-.33.1-.3.07-.26.04-.21.02H8.77l-.69.05-.59.14-.5.22-.41.27-.33.32-.27.35-.2.36-.15.37-.1.35-.07.32-.04.27-.02.21v3.06H3.17l-.21-.03-.28-.07-.32-.12-.35-.18-.36-.26-.36-.36-.35-.46-.32-.59-.28-.73-.21-.88-.14-1.050-.05-1.23.06-1.22.16-1.04.24-.87.32-.71.36-.57.4-.44.42-.33.42-.24.4-.16.36-.1.32-.05.24-.01h.16l.06.01h8.16v-.83H6.18l-.01-2.75-.02-.37.05-.34.11-.31.17-.28.25-.26.31-.23.38-.2.44-.18.51-.15.58-.12.64-.1.71-.06.77-.04.84-.02 1.27.05zm-6.3 1.98l-.23.33-.08.41.08.41.23.34.33.22.41.09.41-.09.33-.22.23-.34.08-.41-.08-.41-.23-.33-.33-.22-.41-.09-.41.09zm13.090 3.95l.28.06.32.12.35.18.36.27.36.35.35.47.32.59.28.73.21.88.14 1.04.05 1.23-.06 1.23-.16 1.04-.24.86-.32.71-.36.57-.4.45-.42.33-.42.24-.4.16-.36.09-.32.05-.24.02-.16-.01h-8.22v.82h5.84l.01 2.76.02.36-.05.34-.11.31-.17.29-.25.25-.31.24-.38.2-.44.17-.51.15-.58.13-.64.09-.71.07-.77.04-.84.01-1.27-.04-1.07-.14-.9-.2-.73-.25-.59-.3-.45-.33-.34-.34-.25-.34-.16-.33-.1-.3-.04-.25-.02-.2.01-.13v-5.34l.05-.64.13-.54.21-.46.26-.38.3-.32.33-.24.35-.2.35-.14.33-.1.3-.06.26-.04.21-.02.13-.01h5.84l.69-.05.59-.14.5-.21.41-.28.33-.32.27-.35.2-.36.15-.36.1-.35.07-.32.04-.28.02-.21V6.07h2.09l.14.01zm-6.47 14.25l-.23.33-.08.41.08.41.23.33.33.23.41.08.41-.08.33-.23.23-.33.08-.41-.08-.41-.23-.33-.33-.23-.41-.08-.41.08z" fill="#519aba"/>
<text x="89.80" y="665.97" font-family="Liberation Sans" font-size="13.2" font-weight="normal" font-style="normal" fill="#cccccc" textLength="119.67" lengthAdjust="spacingAndGlyphs" style="white-space:pre">recommendation.py</text>
<path transform="translate(71.20,677.98) scale(0.4583)" d="M14.25.18l.9.2.73.26.59.3.45.32.34.34.25.34.16.33.1.3.04.26.02.2-.01.13V8.5l-.05.63-.13.55-.21.46-.26.38-.3.31-.33.25-.35.19-.35.14-.33.1-.3.07-.26.04-.21.02H8.77l-.69.05-.59.14-.5.22-.41.27-.33.32-.27.35-.2.36-.15.37-.1.35-.07.32-.04.27-.02.21v3.06H3.17l-.21-.03-.28-.07-.32-.12-.35-.18-.36-.26-.36-.36-.35-.46-.32-.59-.28-.73-.21-.88-.14-1.050-.05-1.23.06-1.22.16-1.04.24-.87.32-.71.36-.57.4-.44.42-.33.42-.24.4-.16.36-.1.32-.05.24-.01h.16l.06.01h8.16v-.83H6.18l-.01-2.75-.02-.37.05-.34.11-.31.17-.28.25-.26.31-.23.38-.2.44-.18.51-.15.58-.12.64-.1.71-.06.77-.04.84-.02 1.27.05zm-6.3 1.98l-.23.33-.08.41.08.41.23.34.33.22.41.09.41-.09.33-.22.23-.34.08-.41-.08-.41-.23-.33-.33-.22-.41-.09-.41.09zm13.090 3.95l.28.06.32.12.35.18.36.27.36.35.35.47.32.59.28.73.21.88.14 1.04.05 1.23-.06 1.23-.16 1.04-.24.86-.32.71-.36.57-.4.45-.42.33-.42.24-.4.16-.36.09-.32.05-.24.02-.16-.01h-8.22v.82h5.84l.01 2.76.02.36-.05.34-.11.31-.17.29-.25.25-.31.24-.38.2-.44.17-.51.15-.58.13-.64.09-.71.07-.77.04-.84.01-1.27-.04-1.07-.14-.9-.2-.73-.25-.59-.3-.45-.33-.34-.34-.25-.34-.16-.33-.1-.3-.04-.25-.02-.2.01-.13v-5.34l.05-.64.13-.54.21-.46.26-.38.3-.32.33-.24.35-.2.35-.14.33-.1.3-.06.26-.04.21-.02.13-.01h5.84l.69-.05.59-.14.5-.21.41-.28.33-.32.27-.35.2-.36.15-.36.1-.35.07-.32.04-.28.02-.21V6.07h2.09l.14.01zm-6.47 14.25l-.23.33-.08.41.08.41.23.33.33.23.41.08.41-.08.33-.23.23-.33.08-.41-.08-.41-.23-.33-.33-.23-.41-.08-.41.08z" fill="#519aba"/>
<text x="89.80" y="688.88" font-family="Liberation Sans" font-size="13.2" font-weight="normal" font-style="normal" fill="#cccccc" textLength="75.20" lengthAdjust="spacingAndGlyphs" style="white-space:pre">scheduler.py</text>
<path transform="translate(71.20,700.90) scale(0.4583)" d="M14.25.18l.9.2.73.26.59.3.45.32.34.34.25.34.16.33.1.3.04.26.02.2-.01.13V8.5l-.05.63-.13.55-.21.46-.26.38-.3.31-.33.25-.35.19-.35.14-.33.1-.3.07-.26.04-.21.02H8.77l-.69.05-.59.14-.5.22-.41.27-.33.32-.27.35-.2.36-.15.37-.1.35-.07.32-.04.27-.02.21v3.06H3.17l-.21-.03-.28-.07-.32-.12-.35-.18-.36-.26-.36-.36-.35-.46-.32-.59-.28-.73-.21-.88-.14-1.050-.05-1.23.06-1.22.16-1.04.24-.87.32-.71.36-.57.4-.44.42-.33.42-.24.4-.16.36-.1.32-.05.24-.01h.16l.06.01h8.16v-.83H6.18l-.01-2.75-.02-.37.05-.34.11-.31.17-.28.25-.26.31-.23.38-.2.44-.18.51-.15.58-.12.64-.1.71-.06.77-.04.84-.02 1.27.05zm-6.3 1.98l-.23.33-.08.41.08.41.23.34.33.22.41.09.41-.09.33-.22.23-.34.08-.41-.08-.41-.23-.33-.33-.22-.41-.09-.41.09zm13.090 3.95l.28.06.32.12.35.18.36.27.36.35.35.47.32.59.28.73.21.88.14 1.04.05 1.23-.06 1.23-.16 1.04-.24.86-.32.71-.36.57-.4.45-.42.33-.42.24-.4.16-.36.09-.32.05-.24.02-.16-.01h-8.22v.82h5.84l.01 2.76.02.36-.05.34-.11.31-.17.29-.25.25-.31.24-.38.2-.44.17-.51.15-.58.13-.64.09-.71.07-.77.04-.84.01-1.27-.04-1.07-.14-.9-.2-.73-.25-.59-.3-.45-.33-.34-.34-.25-.34-.16-.33-.1-.3-.04-.25-.02-.2.01-.13v-5.34l.05-.64.13-.54.21-.46.26-.38.3-.32.33-.24.35-.2.35-.14.33-.1.3-.06.26-.04.21-.02.13-.01h5.84l.69-.05.59-.14.5-.21.41-.28.33-.32.27-.35.2-.36.15-.36.1-.35.07-.32.04-.28.02-.21V6.07h2.09l.14.01zm-6.47 14.25l-.23.33-.08.41.08.41.23.33.33.23.41.08.41-.08.33-.23.23-.33.08-.41-.08-.41-.23-.33-.33-.23-.41-.08-.41.08z" fill="#519aba"/>
<text x="89.80" y="711.80" font-family="Liberation Sans" font-size="13.2" font-weight="normal" font-style="normal" fill="#cccccc" textLength="94.68" lengthAdjust="spacingAndGlyphs" style="white-space:pre">sleep_service.py</text>
<path transform="translate(71.20,723.82) scale(0.4583)" d="M14.25.18l.9.2.73.26.59.3.45.32.34.34.25.34.16.33.1.3.04.26.02.2-.01.13V8.5l-.05.63-.13.55-.21.46-.26.38-.3.31-.33.25-.35.19-.35.14-.33.1-.3.07-.26.04-.21.02H8.77l-.69.05-.59.14-.5.22-.41.27-.33.32-.27.35-.2.36-.15.37-.1.35-.07.32-.04.27-.02.21v3.06H3.17l-.21-.03-.28-.07-.32-.12-.35-.18-.36-.26-.36-.36-.35-.46-.32-.59-.28-.73-.21-.88-.14-1.050-.05-1.23.06-1.22.16-1.04.24-.87.32-.71.36-.57.4-.44.42-.33.42-.24.4-.16.36-.1.32-.05.24-.01h.16l.06.01h8.16v-.83H6.18l-.01-2.75-.02-.37.05-.34.11-.31.17-.28.25-.26.31-.23.38-.2.44-.18.51-.15.58-.12.64-.1.71-.06.77-.04.84-.02 1.27.05zm-6.3 1.98l-.23.33-.08.41.08.41.23.34.33.22.41.09.41-.09.33-.22.23-.34.08-.41-.08-.41-.23-.33-.33-.22-.41-.09-.41.09zm13.090 3.95l.28.06.32.12.35.18.36.27.36.35.35.47.32.59.28.73.21.88.14 1.04.05 1.23-.06 1.23-.16 1.04-.24.86-.32.71-.36.57-.4.45-.42.33-.42.24-.4.16-.36.09-.32.05-.24.02-.16-.01h-8.22v.82h5.84l.01 2.76.02.36-.05.34-.11.31-.17.29-.25.25-.31.24-.38.2-.44.17-.51.15-.58.13-.64.09-.71.07-.77.04-.84.01-1.27-.04-1.07-.14-.9-.2-.73-.25-.59-.3-.45-.33-.34-.34-.25-.34-.16-.33-.1-.3-.04-.25-.02-.2.01-.13v-5.34l.05-.64.13-.54.21-.46.26-.38.3-.32.33-.24.35-.2.35-.14.33-.1.3-.06.26-.04.21-.02.13-.01h5.84l.69-.05.59-.14.5-.21.41-.28.33-.32.27-.35.2-.36.15-.36.1-.35.07-.32.04-.28.02-.21V6.07h2.09l.14.01zm-6.47 14.25l-.23.33-.08.41.08.41.23.33.33.23.41.08.41-.08.33-.23.23-.33.08-.41-.08-.41-.23-.33-.33-.23-.41-.08-.41.08z" fill="#519aba"/>
<text x="89.80" y="734.72" font-family="Liberation Sans" font-size="13.2" font-weight="normal" font-style="normal" fill="#cccccc" textLength="53.23" lengthAdjust="spacingAndGlyphs" style="white-space:pre">streak.py</text>
<path transform="translate(71.20,746.73) scale(0.4583)" d="M14.25.18l.9.2.73.26.59.3.45.32.34.34.25.34.16.33.1.3.04.26.02.2-.01.13V8.5l-.05.63-.13.55-.21.46-.26.38-.3.31-.33.25-.35.19-.35.14-.33.1-.3.07-.26.04-.21.02H8.77l-.69.05-.59.14-.5.22-.41.27-.33.32-.27.35-.2.36-.15.37-.1.35-.07.32-.04.27-.02.21v3.06H3.17l-.21-.03-.28-.07-.32-.12-.35-.18-.36-.26-.36-.36-.35-.46-.32-.59-.28-.73-.21-.88-.14-1.050-.05-1.23.06-1.22.16-1.04.24-.87.32-.71.36-.57.4-.44.42-.33.42-.24.4-.16.36-.1.32-.05.24-.01h.16l.06.01h8.16v-.83H6.18l-.01-2.75-.02-.37.05-.34.11-.31.17-.28.25-.26.31-.23.38-.2.44-.18.51-.15.58-.12.64-.1.71-.06.77-.04.84-.02 1.27.05zm-6.3 1.98l-.23.33-.08.41.08.41.23.34.33.22.41.09.41-.09.33-.22.23-.34.08-.41-.08-.41-.23-.33-.33-.22-.41-.09-.41.09zm13.090 3.95l.28.06.32.12.35.18.36.27.36.35.35.47.32.59.28.73.21.88.14 1.04.05 1.23-.06 1.23-.16 1.04-.24.86-.32.71-.36.57-.4.45-.42.33-.42.24-.4.16-.36.09-.32.05-.24.02-.16-.01h-8.22v.82h5.84l.01 2.76.02.36-.05.34-.11.31-.17.29-.25.25-.31.24-.38.2-.44.17-.51.15-.58.13-.64.09-.71.07-.77.04-.84.01-1.27-.04-1.07-.14-.9-.2-.73-.25-.59-.3-.45-.33-.34-.34-.25-.34-.16-.33-.1-.3-.04-.25-.02-.2.01-.13v-5.34l.05-.64.13-.54.21-.46.26-.38.3-.32.33-.24.35-.2.35-.14.33-.1.3-.06.26-.04.21-.02.13-.01h5.84l.69-.05.59-.14.5-.21.41-.28.33-.32.27-.35.2-.36.15-.36.1-.35.07-.32.04-.28.02-.21V6.07h2.09l.14.01zm-6.47 14.25l-.23.33-.08.41.08.41.23.33.33.23.41.08.41-.08.33-.23.23-.33.08-.41-.08-.41-.23-.33-.33-.23-.41-.08-.41.08z" fill="#519aba"/>
<text x="89.80" y="757.63" font-family="Liberation Sans" font-size="13.2" font-weight="normal" font-style="normal" fill="#cccccc" textLength="77.18" lengthAdjust="spacingAndGlyphs" style="white-space:pre">user_state.py</text>
<path d="M64.50 772.15 L70.00 778.15 L75.50 772.15" stroke="#cccccc" stroke-width="1.1" fill="none"/>
<text x="81.57" y="780.55" font-family="Liberation Sans" font-size="13.2" font-weight="normal" font-style="normal" fill="#cccccc" textLength="46.44" lengthAdjust="spacingAndGlyphs" style="white-space:pre">workers</text>
<path d="M73.00 795.06 L78.50 801.06 L84.00 795.06" stroke="#8c8c8c" stroke-width="1.1" fill="none"/>
<text x="90.04" y="803.46" font-family="Liberation Sans" font-size="13.2" font-weight="normal" font-style="normal" fill="#8c8c8c" textLength="70.28" lengthAdjust="spacingAndGlyphs" style="white-space:pre">__pycache__</text>
<g fill="#8c8c8c"><rect x="83" y="816.18" width="9" height="1.6"/><rect x="83" y="818.9799999999999" width="10" height="1.6"/><rect x="83" y="821.78" width="7" height="1.6"/><rect x="83" y="824.5799999999999" width="9" height="1.6"/></g>
<text x="98.46" y="826.38" font-family="Liberation Sans" font-size="13.2" font-weight="normal" font-style="normal" fill="#8c8c8c" textLength="143.53" lengthAdjust="spacingAndGlyphs" style="white-space:pre">__init__.cpython-312.pyc</text>
<g fill="#8c8c8c"><rect x="83" y="839.0959999999999" width="9" height="1.6"/><rect x="83" y="841.8959999999998" width="10" height="1.6"/><rect x="83" y="844.6959999999999" width="7" height="1.6"/><rect x="83" y="847.4959999999999" width="9" height="1.6"/></g>
<text x="98.20" y="849.30" font-family="Liberation Sans" font-size="13.2" font-weight="normal" font-style="normal" fill="#8c8c8c" textLength="226.81" lengthAdjust="spacingAndGlyphs" style="white-space:pre">inactive_user_notifier.cpython-312.pyc</text>
<g fill="#8c8c8c"><rect x="83" y="862.012" width="9" height="1.6"/><rect x="83" y="864.8119999999999" width="10" height="1.6"/><rect x="83" y="867.612" width="7" height="1.6"/><rect x="83" y="870.4119999999999" width="9" height="1.6"/></g>
<text x="98.20" y="872.21" font-family="Liberation Sans" font-size="13.2" font-weight="normal" font-style="normal" fill="#8c8c8c" textLength="239.80" lengthAdjust="spacingAndGlyphs" style="white-space:pre">streak_warning_notifier.cpython-312.pyc</text>
<g fill="#8c8c8c"><rect x="83" y="884.928" width="9" height="1.6"/><rect x="83" y="887.728" width="10" height="1.6"/><rect x="83" y="890.528" width="7" height="1.6"/><rect x="83" y="893.328" width="9" height="1.6"/></g>
<text x="98.20" y="895.13" font-family="Liberation Sans" font-size="13.2" font-weight="normal" font-style="normal" fill="#8c8c8c" textLength="158.83" lengthAdjust="spacingAndGlyphs" style="white-space:pre">test_push.cpython-312.pyc</text>
<path transform="translate(71.20,907.14) scale(0.4583)" d="M14.25.18l.9.2.73.26.59.3.45.32.34.34.25.34.16.33.1.3.04.26.02.2-.01.13V8.5l-.05.63-.13.55-.21.46-.26.38-.3.31-.33.25-.35.19-.35.14-.33.1-.3.07-.26.04-.21.02H8.77l-.69.05-.59.14-.5.22-.41.27-.33.32-.27.35-.2.36-.15.37-.1.35-.07.32-.04.27-.02.21v3.06H3.17l-.21-.03-.28-.07-.32-.12-.35-.18-.36-.26-.36-.36-.35-.46-.32-.59-.28-.73-.21-.88-.14-1.050-.05-1.23.06-1.22.16-1.04.24-.87.32-.71.36-.57.4-.44.42-.33.42-.24.4-.16.36-.1.32-.05.24-.01h.16l.06.01h8.16v-.83H6.18l-.01-2.75-.02-.37.05-.34.11-.31.17-.28.25-.26.31-.23.38-.2.44-.18.51-.15.58-.12.64-.1.71-.06.77-.04.84-.02 1.27.05zm-6.3 1.98l-.23.33-.08.41.08.41.23.34.33.22.41.09.41-.09.33-.22.23-.34.08-.41-.08-.41-.23-.33-.33-.22-.41-.09-.41.09zm13.090 3.95l.28.06.32.12.35.18.36.27.36.35.35.47.32.59.28.73.21.88.14 1.04.05 1.23-.06 1.23-.16 1.04-.24.86-.32.71-.36.57-.4.45-.42.33-.42.24-.4.16-.36.09-.32.05-.24.02-.16-.01h-8.22v.82h5.84l.01 2.76.02.36-.05.34-.11.31-.17.29-.25.25-.31.24-.38.2-.44.17-.51.15-.58.13-.64.09-.71.07-.77.04-.84.01-1.27-.04-1.07-.14-.9-.2-.73-.25-.59-.3-.45-.33-.34-.34-.25-.34-.16-.33-.1-.3-.04-.25-.02-.2.01-.13v-5.34l.05-.64.13-.54.21-.46.26-.38.3-.32.33-.24.35-.2.35-.14.33-.1.3-.06.26-.04.21-.02.13-.01h5.84l.69-.05.59-.14.5-.21.41-.28.33-.32.27-.35.2-.36.15-.36.1-.35.07-.32.04-.28.02-.21V6.07h2.09l.14.01zm-6.47 14.25l-.23.33-.08.41.08.41.23.33.33.23.41.08.41-.08.33-.23.23-.33.08-.41-.08-.41-.23-.33-.33-.23-.41-.08-.41.08z" fill="#519aba"/>
<text x="90.04" y="918.04" font-family="Liberation Sans" font-size="13.2" font-weight="normal" font-style="normal" fill="#cccccc" textLength="58.68" lengthAdjust="spacingAndGlyphs" style="white-space:pre">__init__.py</text>
<path transform="translate(71.20,930.06) scale(0.4583)" d="M14.25.18l.9.2.73.26.59.3.45.32.34.34.25.34.16.33.1.3.04.26.02.2-.01.13V8.5l-.05.63-.13.55-.21.46-.26.38-.3.31-.33.25-.35.19-.35.14-.33.1-.3.07-.26.04-.21.02H8.77l-.69.05-.59.14-.5.22-.41.27-.33.32-.27.35-.2.36-.15.37-.1.35-.07.32-.04.27-.02.21v3.06H3.17l-.21-.03-.28-.07-.32-.12-.35-.18-.36-.26-.36-.36-.35-.46-.32-.59-.28-.73-.21-.88-.14-1.050-.05-1.23.06-1.22.16-1.04.24-.87.32-.71.36-.57.4-.44.42-.33.42-.24.4-.16.36-.1.32-.05.24-.01h.16l.06.01h8.16v-.83H6.18l-.01-2.75-.02-.37.05-.34.11-.31.17-.28.25-.26.31-.23.38-.2.44-.18.51-.15.58-.12.64-.1.71-.06.77-.04.84-.02 1.27.05zm-6.3 1.98l-.23.33-.08.41.08.41.23.34.33.22.41.09.41-.09.33-.22.23-.34.08-.41-.08-.41-.23-.33-.33-.22-.41-.09-.41.09zm13.090 3.95l.28.06.32.12.35.18.36.27.36.35.35.47.32.59.28.73.21.88.14 1.04.05 1.23-.06 1.23-.16 1.04-.24.86-.32.71-.36.57-.4.45-.42.33-.42.24-.4.16-.36.09-.32.05-.24.02-.16-.01h-8.22v.82h5.84l.01 2.76.02.36-.05.34-.11.31-.17.29-.25.25-.31.24-.38.2-.44.17-.51.15-.58.13-.64.09-.71.07-.77.04-.84.01-1.27-.04-1.07-.14-.9-.2-.73-.25-.59-.3-.45-.33-.34-.34-.25-.34-.16-.33-.1-.3-.04-.25-.02-.2.01-.13v-5.34l.05-.64.13-.54.21-.46.26-.38.3-.32.33-.24.35-.2.35-.14.33-.1.3-.06.26-.04.21-.02.13-.01h5.84l.69-.05.59-.14.5-.21.41-.28.33-.32.27-.35.2-.36.15-.36.1-.35.07-.32.04-.28.02-.21V6.07h2.09l.14.01zm-6.47 14.25l-.23.33-.08.41.08.41.23.33.33.23.41.08.41-.08.33-.23.23-.33.08-.41-.08-.41-.23-.33-.33-.23-.41-.08-.41.08z" fill="#519aba"/>
<text x="89.80" y="940.96" font-family="Liberation Sans" font-size="13.2" font-weight="normal" font-style="normal" fill="#cccccc" textLength="142.28" lengthAdjust="spacingAndGlyphs" style="white-space:pre">inactive_user_notifier.py</text>
<path d="M57.60 957.00 L63.60 962.50 L57.60 968.00" stroke="#cccccc" stroke-width="1.1" fill="none"/>
<text x="71.40" y="967.00" font-family="Liberation Sans" font-size="11.2" font-weight="bold" font-style="normal" fill="#cccccc" textLength="51.82" lengthAdjust="spacingAndGlyphs" style="white-space:pre">TIMELINE</text>
<path d="M57.60 980.00 L63.60 985.50 L57.60 991.00" stroke="#cccccc" stroke-width="1.1" fill="none"/>
<text x="71.00" y="989.00" font-family="Liberation Sans" font-size="11.2" font-weight="bold" font-style="normal" fill="#cccccc" textLength="47.69" lengthAdjust="spacingAndGlyphs" style="white-space:pre">OUTLINE</text>
<g transform="translate(12,10.4) scale(0.855)"><path fill="#0a8ee8" d="M23.15 2.587L18.21.21a1.494 1.494 0 0 0-1.705.29l-9.46 8.63-4.12-3.128a.999.999 0 0 0-1.276.057L.327 7.261A1 1 0 0 0 .326 8.74L3.899 12 .326 15.26a1 1 0 0 0 .001 1.479L1.65 17.94a.999.999 0 0 0 1.276.057l4.12-3.128 9.46 8.63a1.492 1.492 0 0 0 1.704.29l4.942-2.377A1.5 1.5 0 0 0 24 20.06V3.939a1.5 1.5 0 0 0-.85-1.352zm-5.146 14.861L10.826 12l7.178-5.448v10.896z"/><path fill="#2aa7f5" d="M23.15 2.587L18.21.21a1.494 1.494 0 0 0-1.705.29L18 6.55v10.9l-1.5 6.05a1.492 1.492 0 0 0 1.704.29l4.942-2.377A1.5 1.5 0 0 0 24 20.06V3.939a1.5 1.5 0 0 0-.85-1.352z"/></g>
<text x="54.60" y="27.90" font-family="Liberation Sans" font-size="14.8" font-weight="normal" font-style="normal" fill="#cccccc" textLength="23.22" lengthAdjust="spacingAndGlyphs" style="white-space:pre">File</text>
<text x="98.00" y="27.90" font-family="Liberation Sans" font-size="14.8" font-weight="normal" font-style="normal" fill="#cccccc" textLength="26.97" lengthAdjust="spacingAndGlyphs" style="white-space:pre">Edit</text>
<text x="145.50" y="27.90" font-family="Liberation Sans" font-size="14.8" font-weight="normal" font-style="normal" fill="#cccccc" textLength="64.98" lengthAdjust="spacingAndGlyphs" style="white-space:pre">Selection</text>
<text x="230.40" y="27.90" font-family="Liberation Sans" font-size="14.8" font-weight="normal" font-style="normal" fill="#cccccc" textLength="34.29" lengthAdjust="spacingAndGlyphs" style="white-space:pre">View</text>
<text x="284.40" y="27.90" font-family="Liberation Sans" font-size="14.8" font-weight="normal" font-style="normal" fill="#cccccc" textLength="20.78" lengthAdjust="spacingAndGlyphs" style="white-space:pre">Go</text>
<text x="326.00" y="27.90" font-family="Liberation Sans" font-size="14.8" font-weight="normal" font-style="normal" fill="#cccccc" textLength="27.29" lengthAdjust="spacingAndGlyphs" style="white-space:pre">Run</text>
<circle cx="382.30" cy="21.3" r="1.4" fill="#cccccc"/>
<circle cx="387.90" cy="21.3" r="1.4" fill="#cccccc"/>
<circle cx="393.50" cy="21.3" r="1.4" fill="#cccccc"/>
<g fill="none" stroke-width="1.3"><path d="M494.8 21h15.2M501.5 14.6L494.8 21l6.7 6.4" stroke="#cccccc"/><path d="M527 21h15M535.5 14.6L542 21l-6.5 6.4" stroke="#858585"/></g>
<g fill="none" stroke="#bdbdbd" stroke-width="1.3"><circle cx="855.2" cy="19.6" r="5.8"/><path d="M859.4 23.8l4.8 4.8"/></g>
<text x="872.30" y="26.60" font-family="Liberation Sans" font-size="14.2" font-weight="normal" font-style="normal" fill="#cccccc" textLength="155.72" lengthAdjust="spacingAndGlyphs" style="white-space:pre">healthstagram-backend</text>
<g fill="none" stroke="#e0e0e0" stroke-width="1.3"><path d="M1345.5 13.5h-8.3c-1.1 0-1.8 0.7-1.8 1.8v8.3c0 1.1 0.7 1.8 1.8 1.8h1.6v3.6l3.6-3.6h6.2c1.1 0 1.8-0.7 1.8-1.8v-1.2"/></g><path d="M1350 10.6l1 2.4 2.4 1-2.4 1-1 2.4-1-2.4-2.4-1 2.4-1z M1353.3 16.6l0.8 1.8 1.8 0.8-1.8 0.8-0.8 1.8-0.8-1.8-1.8-0.8 1.8-0.8z" fill="#e0e0e0"/>
<path d="M1367.8 18.2l4.3 4.3 4.3-4.3" fill="none" stroke="#cccccc" stroke-width="1.1"/>
<circle cx="1400" cy="21" r="5.4" fill="#d9d9d9"/>
<text x="1415.00" y="27.00" font-family="Liberation Sans" font-size="13.5" font-weight="bold" font-style="normal" fill="#e0e0e0" textLength="5.51" lengthAdjust="spacingAndGlyphs" style="white-space:pre">1</text>
<g fill="none" stroke="#cccccc" stroke-width="1.2"><rect x="1622.3" y="12.6" width="5.3" height="16.8" rx="1.2"/><rect x="1633.2" y="12.6" width="6.4" height="6.4" rx="1.2"/><rect x="1633.2" y="23" width="6.4" height="6.4" rx="1.2"/><rect x="1654.6" y="12.6" width="17.6" height="16.8" rx="2"/><rect x="1687.2" y="12.6" width="17.6" height="16.8" rx="2"/><path d="M1687.5 24.2h17"/><rect x="1719.6" y="12.6" width="17.6" height="16.8" rx="2"/><path d="M1728.4 12.8v16.4"/></g><path d="M1656.6 12.6h3.6v16.8h-3.6a2 2 0 0 1-2-2v-12.8a2 2 0 0 1 2-2z" fill="#cccccc"/>
<g fill="none" stroke="#cccccc" stroke-width="1"><path d="M1771 20.5h13.5"/><rect x="1827.2" y="17.2" width="10.6" height="10.6" rx="1.5"/><path d="M1829.6 15h8.4a2.4 2.4 0 0 1 2.4 2.4v8.4"/><path d="M1885 14.8l13.2 13.2M1898.2 14.8l-13.2 13.2"/></g>
<g fill="none" stroke="#d7d7d7" stroke-width="1.5" stroke-linejoin="round"><path d="M18.5 57.2h7.8l7.8 7.8v12.6a2 2 0 0 1-2 2H20.5a2 2 0 0 1-2-2z"/><path d="M26 57.4v7.6h8"/><path d="M15 61v17.2a3 3 0 0 0 3 3h11.8"/></g>
<g fill="none" stroke="#868686" stroke-width="1.5" stroke-linecap="round" stroke-linejoin="round"><circle cx="23.2" cy="116.2" r="8.6"/><path d="M29.4 122.4l6 6"/><circle cx="19.4" cy="159.6" r="2.9"/><circle cx="19.4" cy="176.6" r="2.9"/><circle cx="30.6" cy="164.2" r="2.9"/><path d="M19.4 162.5v11.2M30.6 167.1c0 3-2.5 4.2-5.5 4.2h-2.7c-1.6 0-3 1.2-3 2.4"/><path d="M17.8 216.6V210.2a1 1 0 0 1 1.5-0.9l14.6 8a1 1 0 0 1 0 1.7l-8.6 4.8"/><path d="M15.2 222.6v3.4a3.6 4.4 0 0 0 7.2 0v-3.4a3.6 4 0 0 0-7.2 0z"/><path d="M15.2 222.4h7.2M12.6 220.2l2.6 2M25 220.2l-2.6 2M12.4 225.6h2.8M22.4 225.6h2.8M12.6 230.8l2.6-2M25 230.8l-2.6-2"/><rect x="14.6" y="259.6" width="9.4" height="9.4" rx="0.8"/><rect x="14.6" y="269" width="9.4" height="9.4" rx="0.8"/><rect x="24" y="269" width="9.4" height="9.4" rx="0.8"/><path d="M29.6 257.2l5.6 5.6-5.6 5.6-5.6-5.6z"/><path d="M24 324.2H15.2a1.8 1.8 0 0 1-1.8-1.8V310.4a1.8 1.8 0 0 1 1.8-1.8h15.6a1.8 1.8 0 0 1 1.8 1.8v5"/><path d="M19.6 324.4v2.8M16.4 327.4h6"/><path d="M17.4 357.6h15M20 357.8v8.6l-4.6 11.2c-0.3 0.8 0.2 1.6 1 1.6h16.4c0.8 0 1.3-0.8 1-1.6l-4.6-11.2v-8.6M17.8 371.4h14.6"/><path d="M28 409h-13a2 2 0 0 0-2 2v11.4a2 2 0 0 0 2 2h2.6v4.6l4.6-4.6h9.8a2 2 0 0 0 2-2v-3"/><path d="M24.6 458.2h7.8l-4.6 7.6h5l-11.6 13.4 2.8-9.4h-4.6z"/><circle cx="25.4" cy="568.3" r="12"/><path d="M14.6 614.2l12.4-5.6 10 4v12l-11.8 4.4-10.6-4.6z"/><path d="M14.6 614.2l10.6 4v10.6M25.2 618.2l11.8-5.6M28.4 621v5.6M31 619.8v5.8M33.6 618.6v5.8"/><circle cx="25" cy="921.3" r="10.6"/></g>
<path d="M30.2 406l1.2 2.8 2.8 1.2-2.8 1.2-1.2 2.8-1.2-2.8-2.8-1.2 2.8-1.2z M34.4 412.8l0.9 2.1 2.1 0.9-2.1 0.9-0.9 2.1-0.9-2.1-2.1-0.9 2.1-0.9z" fill="#868686"/>
<circle cx="33.3" cy="276.9" r="8.5" fill="#0078d4"/>
<text x="30.40" y="281.00" font-family="Liberation Sans" font-size="11" font-weight="bold" font-style="normal" fill="#ffffff" textLength="5.81" lengthAdjust="spacingAndGlyphs" style="white-space:pre">2</text>
<circle cx="30.3" cy="323.5" r="7.2" fill="#868686" stroke="#181818" stroke-width="1"/><path d="M26.8 322.2l2.4 2.4-2.4 2.4M33.6 319.6l-2.4 2.4 2.4 2.4" stroke="#181818" stroke-width="1.3" fill="none"/>
<path transform="translate(13,506.4) scale(1.03)" d="M14.25.18l.9.2.73.26.59.3.45.32.34.34.25.34.16.33.1.3.04.26.02.2-.01.13V8.5l-.05.63-.13.55-.21.46-.26.38-.3.31-.33.25-.35.19-.35.14-.33.1-.3.07-.26.04-.21.02H8.77l-.69.05-.59.14-.5.22-.41.27-.33.32-.27.35-.2.36-.15.37-.1.35-.07.32-.04.27-.02.21v3.06H3.17l-.21-.03-.28-.07-.32-.12-.35-.18-.36-.26-.36-.36-.35-.46-.32-.59-.28-.73-.21-.88-.14-1.050-.05-1.23.06-1.22.16-1.04.24-.87.32-.71.36-.57.4-.44.42-.33.42-.24.4-.16.36-.1.32-.05.24-.01h.16l.06.01h8.16v-.83H6.18l-.01-2.75-.02-.37.05-.34.11-.31.17-.28.25-.26.31-.23.38-.2.44-.18.51-.15.58-.12.64-.1.71-.06.77-.04.84-.02 1.27.05zm-6.3 1.98l-.23.33-.08.41.08.41.23.34.33.22.41.09.41-.09.33-.22.23-.34.08-.41-.08-.41-.23-.33-.33-.22-.41-.09-.41.09zm13.090 3.95l.28.06.32.12.35.18.36.27.36.35.35.47.32.59.28.73.21.88.14 1.04.05 1.23-.06 1.23-.16 1.04-.24.86-.32.71-.36.57-.4.45-.42.33-.42.24-.4.16-.36.09-.32.05-.24.02-.16-.01h-8.22v.82h5.84l.01 2.76.02.36-.05.34-.11.31-.17.29-.25.25-.31.24-.38.2-.44.17-.51.15-.58.13-.64.09-.71.07-.77.04-.84.01-1.27-.04-1.07-.14-.9-.2-.73-.25-.59-.3-.45-.33-.34-.34-.25-.34-.16-.33-.1-.3-.04-.25-.02-.2.01-.13v-5.34l.05-.64.13-.54.21-.46.26-.38.3-.32.33-.24.35-.2.35-.14.33-.1.3-.06.26-.04.21-.02.13-.01h5.84l.69-.05.59-.14.5-.21.41-.28.33-.32.27-.35.2-.36.15-.36.1-.35.07-.32.04-.28.02-.21V6.07h2.09l.14.01zm-6.47 14.25l-.23.33-.08.41.08.41.23.33.33.23.41.08.41-.08.33-.23.23-.33.08-.41-.08-.41-.23-.33-.33-.23-.41-.08-.41.08z" fill="#868686"/>
<path d="M27.2 559.6l-7.4 10.2h5.2l-2.4 7.8 7.6-10.4h-5.2z" fill="#868686"/>
<path transform="translate(13.20,656.10) scale(1.0167)" d="M22.2819 9.8211a5.9847 5.9847 0 0 0-.5157-4.9108 6.0462 6.0462 0 0 0-6.5098-2.9A6.0651 6.0651 0 0 0 4.9807 4.1818a5.9847 5.9847 0 0 0-3.9977 2.9 6.0462 6.0462 0 0 0 .7427 7.0966 5.98 5.98 0 0 0 .511 4.9107 6.051 6.051 0 0 0 6.5146 2.9001A5.9847 5.9847 0 0 0 13.2599 24a6.0557 6.0557 0 0 0 5.7718-4.2058 5.9894 5.9894 0 0 0 3.9977-2.9001 6.0557 6.0557 0 0 0-.7475-7.0729zm-9.022 12.6081a4.4755 4.4755 0 0 1-2.8764-1.0408l.1419-.0804 4.7783-2.7582a.7948.7948 0 0 0 .3927-.6813v-6.7369l2.02 1.1686a.071.071 0 0 1 .038.052v5.5826a4.504 4.504 0 0 1-4.4945 4.4944zm-9.6607-4.1254a4.4708 4.4708 0 0 1-.5346-3.0137l.142.0852 4.783 2.7582a.7712.7712 0 0 0 .7806 0l5.8428-3.3685v2.3324a.0804.0804 0 0 1-.0332.0615L9.74 19.9502a4.4992 4.4992 0 0 1-6.1408-1.6464zM2.3408 7.8956a4.485 4.485 0 0 1 2.3655-1.9728V11.6a.7664.7664 0 0 0 .3879.6765l5.8144 3.3543-2.0201 1.1685a.0757.0757 0 0 1-.071 0l-4.8303-2.7865A4.504 4.504 0 0 1 2.3408 7.872zm16.5963 3.8558L13.1038 8.364 15.1192 7.2a.0757.0757 0 0 1 .071 0l4.8303 2.7913a4.4944 4.4944 0 0 1-.6765 8.1042v-5.6772a.79.79 0 0 0-.407-.667zm2.0107-3.0231l-.142-.0852-4.7735-2.7818a.7759.7759 0 0 0-.7854 0L9.409 9.2297V6.8974a.0662.0662 0 0 1 .0284-.0615l4.8303-2.7866a4.4992 4.4992 0 0 1 6.6802 4.66zM8.3065 12.863l-2.02-1.1638a.0804.0804 0 0 1-.038-.0567V6.0742a4.4992 4.4992 0 0 1 7.3757-3.4537l-.142.0805L8.704 5.459a.7948.7948 0 0 0-.3927.6813zm1.0976-2.3654l2.602-1.4998 2.6069 1.4998v2.9994l-2.5974 1.4997-2.6067-1.4997Z" fill="#868686"/>
<g fill="#868686"><circle cx="25" cy="917.4" r="2.9"/><path d="M19.8 922.2h10.4a0.8 0.8 0 0 1 0.8 0.8c0 3-2.6 5.2-6 5.2s-6-2.2-6-5.2a0.8 0.8 0 0 1 0.8-0.8z"/></g>
<polygon points="23.11,960.33 26.49,960.33 27.20,963.16 28.65,963.76 31.15,962.26 33.54,964.65 32.04,967.15 32.64,968.60 35.47,969.31 35.47,972.69 32.64,973.40 32.04,974.85 33.54,977.35 31.15,979.74 28.65,978.24 27.20,978.84 26.49,981.67 23.11,981.67 22.40,978.84 20.95,978.24 18.45,979.74 16.06,977.35 17.56,974.85 16.96,973.40 14.13,972.69 14.13,969.31 16.96,968.60 17.56,967.15 16.06,964.65 18.45,962.26 20.95,963.76 22.40,963.16" fill="none" stroke="#868686" stroke-width="1.3" stroke-linejoin="round"/><circle cx="24.8" cy="971" r="2.8" fill="none" stroke="#868686" stroke-width="1.3"/>
<circle cx="33.4" cy="980.2" r="8.5" fill="#0078d4"/>
<text x="30.90" y="984.30" font-family="Liberation Sans" font-size="11" font-weight="bold" font-style="normal" fill="#ffffff" textLength="4.51" lengthAdjust="spacingAndGlyphs" style="white-space:pre">1</text>
<path transform="translate(441.00,57.40) scale(0.4583)" d="M14.25.18l.9.2.73.26.59.3.45.32.34.34.25.34.16.33.1.3.04.26.02.2-.01.13V8.5l-.05.63-.13.55-.21.46-.26.38-.3.31-.33.25-.35.19-.35.14-.33.1-.3.07-.26.04-.21.02H8.77l-.69.05-.59.14-.5.22-.41.27-.33.32-.27.35-.2.36-.15.37-.1.35-.07.32-.04.27-.02.21v3.06H3.17l-.21-.03-.28-.07-.32-.12-.35-.18-.36-.26-.36-.36-.35-.46-.32-.59-.28-.73-.21-.88-.14-1.050-.05-1.23.06-1.22.16-1.04.24-.87.32-.71.36-.57.4-.44.42-.33.42-.24.4-.16.36-.1.32-.05.24-.01h.16l.06.01h8.16v-.83H6.18l-.01-2.75-.02-.37.05-.34.11-.31.17-.28.25-.26.31-.23.38-.2.44-.18.51-.15.58-.12.64-.1.71-.06.77-.04.84-.02 1.27.05zm-6.3 1.98l-.23.33-.08.41.08.41.23.34.33.22.41.09.41-.09.33-.22.23-.34.08-.41-.08-.41-.23-.33-.33-.22-.41-.09-.41.09zm13.090 3.95l.28.06.32.12.35.18.36.27.36.35.35.47.32.59.28.73.21.88.14 1.04.05 1.23-.06 1.23-.16 1.04-.24.86-.32.71-.36.57-.4.45-.42.33-.42.24-.4.16-.36.09-.32.05-.24.02-.16-.01h-8.22v.82h5.84l.01 2.76.02.36-.05.34-.11.31-.17.29-.25.25-.31.24-.38.2-.44.17-.51.15-.58.13-.64.09-.71.07-.77.04-.84.01-1.27-.04-1.07-.14-.9-.2-.73-.25-.59-.3-.45-.33-.34-.34-.25-.34-.16-.33-.1-.3-.04-.25-.02-.2.01-.13v-5.34l.05-.64.13-.54.21-.46.26-.38.3-.32.33-.24.35-.2.35-.14.33-.1.3-.06.26-.04.21-.02.13-.01h5.84l.69-.05.59-.14.5-.21.41-.28.33-.32.27-.35.2-.36.15-.36.1-.35.07-.32.04-.28.02-.21V6.07h2.09l.14.01zm-6.47 14.25l-.23.33-.08.41.08.41.23.33.33.23.41.08.41-.08.33-.23.23-.33.08-.41-.08-.41-.23-.33-.33-.23-.41-.08-.41.08z" fill="#519aba"/>
<text x="459.50" y="68.30" font-family="Liberation Sans" font-size="13.2" font-weight="normal" font-style="normal" fill="#9d9d9d" textLength="75.00" lengthAdjust="spacingAndGlyphs" style="white-space:pre">scheduler.py</text>
<path transform="translate(579.30,57.40) scale(0.4583)" d="M14.25.18l.9.2.73.26.59.3.45.32.34.34.25.34.16.33.1.3.04.26.02.2-.01.13V8.5l-.05.63-.13.55-.21.46-.26.38-.3.31-.33.25-.35.19-.35.14-.33.1-.3.07-.26.04-.21.02H8.77l-.69.05-.59.14-.5.22-.41.27-.33.32-.27.35-.2.36-.15.37-.1.35-.07.32-.04.27-.02.21v3.06H3.17l-.21-.03-.28-.07-.32-.12-.35-.18-.36-.26-.36-.36-.35-.46-.32-.59-.28-.73-.21-.88-.14-1.050-.05-1.23.06-1.22.16-1.04.24-.87.32-.71.36-.57.4-.44.42-.33.42-.24.4-.16.36-.1.32-.05.24-.01h.16l.06.01h8.16v-.83H6.18l-.01-2.75-.02-.37.05-.34.11-.31.17-.28.25-.26.31-.23.38-.2.44-.18.51-.15.58-.12.64-.1.71-.06.77-.04.84-.02 1.27.05zm-6.3 1.98l-.23.33-.08.41.08.41.23.34.33.22.41.09.41-.09.33-.22.23-.34.08-.41-.08-.41-.23-.33-.33-.22-.41-.09-.41.09zm13.090 3.95l.28.06.32.12.35.18.36.27.36.35.35.47.32.59.28.73.21.88.14 1.04.05 1.23-.06 1.23-.16 1.04-.24.86-.32.71-.36.57-.4.45-.42.33-.42.24-.4.16-.36.09-.32.05-.24.02-.16-.01h-8.22v.82h5.84l.01 2.76.02.36-.05.34-.11.31-.17.29-.25.25-.31.24-.38.2-.44.17-.51.15-.58.13-.64.09-.71.07-.77.04-.84.01-1.27-.04-1.07-.14-.9-.2-.73-.25-.59-.3-.45-.33-.34-.34-.25-.34-.16-.33-.1-.3-.04-.25-.02-.2.01-.13v-5.34l.05-.64.13-.54.21-.46.26-.38.3-.32.33-.24.35-.2.35-.14.33-.1.3-.06.26-.04.21-.02.13-.01h5.84l.69-.05.59-.14.5-.21.41-.28.33-.32.27-.35.2-.36.15-.36.1-.35.07-.32.04-.28.02-.21V6.07h2.09l.14.01zm-6.47 14.25l-.23.33-.08.41.08.41.23.33.33.23.41.08.41-.08.33-.23.23-.33.08-.41-.08-.41-.23-.33-.33-.23-.41-.08-.41.08z" fill="#519aba"/>
<text x="598.50" y="68.30" font-family="Liberation Sans" font-size="13.2" font-weight="normal" font-style="normal" fill="#9d9d9d" textLength="46.22" lengthAdjust="spacingAndGlyphs" style="white-space:pre">main.py</text>
<path transform="translate(704.40,57.40) scale(0.4583)" d="M14.25.18l.9.2.73.26.59.3.45.32.34.34.25.34.16.33.1.3.04.26.02.2-.01.13V8.5l-.05.63-.13.55-.21.46-.26.38-.3.31-.33.25-.35.19-.35.14-.33.1-.3.07-.26.04-.21.02H8.77l-.69.05-.59.14-.5.22-.41.27-.33.32-.27.35-.2.36-.15.37-.1.35-.07.32-.04.27-.02.21v3.06H3.17l-.21-.03-.28-.07-.32-.12-.35-.18-.36-.26-.36-.36-.35-.46-.32-.59-.28-.73-.21-.88-.14-1.050-.05-1.23.06-1.22.16-1.04.24-.87.32-.71.36-.57.4-.44.42-.33.42-.24.4-.16.36-.1.32-.05.24-.01h.16l.06.01h8.16v-.83H6.18l-.01-2.75-.02-.37.05-.34.11-.31.17-.28.25-.26.31-.23.38-.2.44-.18.51-.15.58-.12.64-.1.71-.06.77-.04.84-.02 1.27.05zm-6.3 1.98l-.23.33-.08.41.08.41.23.34.33.22.41.09.41-.09.33-.22.23-.34.08-.41-.08-.41-.23-.33-.33-.22-.41-.09-.41.09zm13.090 3.95l.28.06.32.12.35.18.36.27.36.35.35.47.32.59.28.73.21.88.14 1.04.05 1.23-.06 1.23-.16 1.04-.24.86-.32.71-.36.57-.4.45-.42.33-.42.24-.4.16-.36.09-.32.05-.24.02-.16-.01h-8.22v.82h5.84l.01 2.76.02.36-.05.34-.11.31-.17.29-.25.25-.31.24-.38.2-.44.17-.51.15-.58.13-.64.09-.71.07-.77.04-.84.01-1.27-.04-1.07-.14-.9-.2-.73-.25-.59-.3-.45-.33-.34-.34-.25-.34-.16-.33-.1-.3-.04-.25-.02-.2.01-.13v-5.34l.05-.64.13-.54.21-.46.26-.38.3-.32.33-.24.35-.2.35-.14.33-.1.3-.06.26-.04.21-.02.13-.01h5.84l.69-.05.59-.14.5-.21.41-.28.33-.32.27-.35.2-.36.15-.36.1-.35.07-.32.04-.28.02-.21V6.07h2.09l.14.01zm-6.47 14.25l-.23.33-.08.41.08.41.23.33.33.23.41.08.41-.08.33-.23.23-.33.08-.41-.08-.41-.23-.33-.33-.23-.41-.08-.41.08z" fill="#519aba"/>
<text x="722.62" y="68.30" font-family="Liberation Sans" font-size="13.2" font-weight="normal" font-style="italic" fill="#ffffff" textLength="106.36" lengthAdjust="spacingAndGlyphs" style="white-space:pre">pinecone_client.py</text>
<path d="M839.6 56.8l10.6 10.6M850.2 56.8l-10.6 10.6" stroke="#e0e0e0" stroke-width="1.3"/>
<g fill="none" stroke="#cccccc" stroke-width="1.2" stroke-linejoin="round"><path d="M1730.6 55.4v12.8l11.6-6.4z"/><path d="M1752.6 59.2l2.6 2.6 2.6-2.6"/><rect x="1861.2" y="54.2" width="15.6" height="14.6" rx="1.6"/><path d="M1869 54.4v14.2"/></g>
<text x="1768.70" y="66.30" font-family="Liberation Sans" font-size="11.6" font-weight="normal" font-style="normal" fill="#cccccc" textLength="54.31" lengthAdjust="spacingAndGlyphs" style="white-space:pre">BLACKBOX</text>
<path transform="translate(1833.00,53.70) scale(0.7167)" d="M22.2819 9.8211a5.9847 5.9847 0 0 0-.5157-4.9108 6.0462 6.0462 0 0 0-6.5098-2.9A6.0651 6.0651 0 0 0 4.9807 4.1818a5.9847 5.9847 0 0 0-3.9977 2.9 6.0462 6.0462 0 0 0 .7427 7.0966 5.98 5.98 0 0 0 .511 4.9107 6.051 6.051 0 0 0 6.5146 2.9001A5.9847 5.9847 0 0 0 13.2599 24a6.0557 6.0557 0 0 0 5.7718-4.2058 5.9894 5.9894 0 0 0 3.9977-2.9001 6.0557 6.0557 0 0 0-.7475-7.0729zm-9.022 12.6081a4.4755 4.4755 0 0 1-2.8764-1.0408l.1419-.0804 4.7783-2.7582a.7948.7948 0 0 0 .3927-.6813v-6.7369l2.02 1.1686a.071.071 0 0 1 .038.052v5.5826a4.504 4.504 0 0 1-4.4945 4.4944zm-9.6607-4.1254a4.4708 4.4708 0 0 1-.5346-3.0137l.142.0852 4.783 2.7582a.7712.7712 0 0 0 .7806 0l5.8428-3.3685v2.3324a.0804.0804 0 0 1-.0332.0615L9.74 19.9502a4.4992 4.4992 0 0 1-6.1408-1.6464zM2.3408 7.8956a4.485 4.485 0 0 1 2.3655-1.9728V11.6a.7664.7664 0 0 0 .3879.6765l5.8144 3.3543-2.0201 1.1685a.0757.0757 0 0 1-.071 0l-4.8303-2.7865A4.504 4.504 0 0 1 2.3408 7.872zm16.5963 3.8558L13.1038 8.364 15.1192 7.2a.0757.0757 0 0 1 .071 0l4.8303 2.7913a4.4944 4.4944 0 0 1-.6765 8.1042v-5.6772a.79.79 0 0 0-.407-.667zm2.0107-3.0231l-.142-.0852-4.7735-2.7818a.7759.7759 0 0 0-.7854 0L9.409 9.2297V6.8974a.0662.0662 0 0 1 .0284-.0615l4.8303-2.7866a4.4992 4.4992 0 0 1 6.6802 4.66zM8.3065 12.863l-2.02-1.1638a.0804.0804 0 0 1-.038-.0567V6.0742a4.4992 4.4992 0 0 1 7.3757-3.4537l-.142.0805L8.704 5.459a.7948.7948 0 0 0-.3927.6813zm1.0976-2.3654l2.602-1.4998 2.6069 1.4998v2.9994l-2.5974 1.4997-2.6067-1.4997Z" fill="#e0e0e0"/>
<circle cx="1891.20" cy="61.5" r="1.2" fill="#cccccc"/>
<circle cx="1896.00" cy="61.5" r="1.2" fill="#cccccc"/>
<circle cx="1900.80" cy="61.5" r="1.2" fill="#cccccc"/>
<text x="442.80" y="96.30" font-family="Liberation Sans" font-size="13.2" font-weight="normal" font-style="normal" fill="#a9a9a9" textLength="46.17" lengthAdjust="spacingAndGlyphs" style="white-space:pre">services</text>
<path d="M495.30 86.90 L499.90 91.40 L495.30 95.90" stroke="#a9a9a9" stroke-width="1" fill="none"/>
<path transform="translate(510.40,85.60) scale(0.4354)" d="M14.25.18l.9.2.73.26.59.3.45.32.34.34.25.34.16.33.1.3.04.26.02.2-.01.13V8.5l-.05.63-.13.55-.21.46-.26.38-.3.31-.33.25-.35.19-.35.14-.33.1-.3.07-.26.04-.21.02H8.77l-.69.05-.59.14-.5.22-.41.27-.33.32-.27.35-.2.36-.15.37-.1.35-.07.32-.04.27-.02.21v3.06H3.17l-.21-.03-.28-.07-.32-.12-.35-.18-.36-.26-.36-.36-.35-.46-.32-.59-.28-.73-.21-.88-.14-1.050-.05-1.23.06-1.22.16-1.04.24-.87.32-.71.36-.57.4-.44.42-.33.42-.24.4-.16.36-.1.32-.05.24-.01h.16l.06.01h8.16v-.83H6.18l-.01-2.75-.02-.37.05-.34.11-.31.17-.28.25-.26.31-.23.38-.2.44-.18.51-.15.58-.12.64-.1.71-.06.77-.04.84-.02 1.27.05zm-6.3 1.98l-.23.33-.08.41.08.41.23.34.33.22.41.09.41-.09.33-.22.23-.34.08-.41-.08-.41-.23-.33-.33-.22-.41-.09-.41.09zm13.090 3.95l.28.06.32.12.35.18.36.27.36.35.35.47.32.59.28.73.21.88.14 1.04.05 1.23-.06 1.23-.16 1.04-.24.86-.32.71-.36.57-.4.45-.42.33-.42.24-.4.16-.36.09-.32.05-.24.02-.16-.01h-8.22v.82h5.84l.01 2.76.02.36-.05.34-.11.31-.17.29-.25.25-.31.24-.38.2-.44.17-.51.15-.58.13-.64.09-.71.07-.77.04-.84.01-1.27-.04-1.07-.14-.9-.2-.73-.25-.59-.3-.45-.33-.34-.34-.25-.34-.16-.33-.1-.3-.04-.25-.02-.2.01-.13v-5.34l.05-.64.13-.54.21-.46.26-.38.3-.32.33-.24.35-.2.35-.14.33-.1.3-.06.26-.04.21-.02.13-.01h5.84l.69-.05.59-.14.5-.21.41-.28.33-.32.27-.35.2-.36.15-.36.1-.35.07-.32.04-.28.02-.21V6.07h2.09l.14.01zm-6.47 14.25l-.23.33-.08.41.08.41.23.33.33.23.41.08.41-.08.33-.23.23-.33.08-.41-.08-.41-.23-.33-.33-.23-.41-.08-.41.08z" fill="#519aba"/>
<text x="529.00" y="96.30" font-family="Liberation Sans" font-size="13.2" font-weight="normal" font-style="normal" fill="#a9a9a9" textLength="109.49" lengthAdjust="spacingAndGlyphs" style="white-space:pre">pinecone_client.py</text>
<path d="M644.70 86.90 L649.30 91.40 L644.70 95.90" stroke="#a9a9a9" stroke-width="1" fill="none"/>
<text x="656.00" y="96.30" font-family="Liberation Sans" font-size="13.2" font-weight="normal" font-style="normal" fill="#a9a9a9" textLength="8.78" lengthAdjust="spacingAndGlyphs" style="white-space:pre">...</text>
<g><rect x="1792.60" y="103.60" width="1" height="1.5" fill="#6a9955" opacity="0.42"/><rect x="1794.60" y="103.60" width="27" height="1.5" fill="#6a9955" opacity="0.42"/><rect x="1792.60" y="107.52" width="6" height="1.5" fill="#c586c0" opacity="0.42"/><rect x="1799.60" y="107.52" width="2" height="1.5" fill="#4ec9b0" opacity="0.42"/><rect x="1792.60" y="109.48" width="6" height="1.5" fill="#c586c0" opacity="0.42"/><rect x="1799.60" y="109.48" width="7" height="1.5" fill="#4ec9b0" opacity="0.42"/><rect x="1792.60" y="111.44" width="4" height="1.5" fill="#c586c0" opacity="0.42"/><rect x="1797.60" y="111.44" width="8" height="1.5" fill="#4ec9b0" opacity="0.42"/><rect x="1806.60" y="111.44" width="6" height="1.5" fill="#c586c0" opacity="0.42"/><rect x="1813.60" y="111.44" width="8" height="1.5" fill="#4ec9b0" opacity="0.42"/><rect x="1792.60" y="113.40" width="4" height="1.5" fill="#c586c0" opacity="0.42"/><rect x="1797.60" y="113.40" width="8" height="1.5" fill="#4ec9b0" opacity="0.42"/><rect x="1805.60" y="113.40" width="1" height="1.5" fill="#d4d4d4" opacity="0.42"/><rect x="1806.60" y="113.40" width="9" height="1.5" fill="#4ec9b0" opacity="0.42"/><rect x="1816.60" y="113.40" width="6" height="1.5" fill="#c586c0" opacity="0.42"/><rect x="1823.60" y="113.40" width="10" height="1.5" fill="#dcdcaa" opacity="0.42"/><rect x="1792.60" y="117.32" width="16" height="1.5" fill="#4fc1ff" opacity="0.42"/><rect x="1809.60" y="117.32" width="1" height="1.5" fill="#d4d4d4" opacity="0.42"/><rect x="1811.60" y="117.32" width="2" height="1.5" fill="#4ec9b0" opacity="0.42"/><rect x="1813.60" y="117.32" width="1" height="1.5" fill="#d4d4d4" opacity="0.42"/><rect x="1814.60" y="117.32" width="6" height="1.5" fill="#dcdcaa" opacity="0.42"/><rect x="1820.60" y="117.32" width="1" height="1.5" fill="#ffd700" opacity="0.42"/><rect x="1821.60" y="117.32" width="18" height="1.5" fill="#ce9178" opacity="0.42"/><rect x="1839.60" y="117.32" width="1" height="1.5" fill="#ffd700" opacity="0.42"/><rect x="1792.60" y="119.28" width="19" height="1.5" fill="#4fc1ff" opacity="0.42"/><rect x="1812.60" y="119.28" width="1" height="1.5" fill="#d4d4d4" opacity="0.42"/><rect x="1814.60" y="119.28" width="2" height="1.5" fill="#4ec9b0" opacity="0.42"/><rect x="1816.60" y="119.28" width="1" height="1.5" fill="#d4d4d4" opacity="0.42"/><rect x="1817.60" y="119.28" width="6" height="1.5" fill="#dcdcaa" opacity="0.42"/><rect x="1823.60" y="119.28" width="1" height="1.5" fill="#ffd700" opacity="0.42"/><rect x="1824.60" y="119.28" width="16" height="1.5" fill="#ce9178" opacity="0.42"/><rect x="1840.60" y="119.28" width="1" height="1.5" fill="#ffd700" opacity="0.42"/><rect x="1792.60" y="123.20" width="1" height="1.5" fill="#6a9955" opacity="0.42"/><rect x="1798.60" y="123.20" width="8" height="1.5" fill="#6a9955" opacity="0.42"/><rect x="1807.60" y="123.20" width="8" height="1.5" fill="#6a9955" opacity="0.42"/><rect x="1816.60" y="123.20" width="6" height="1.5" fill="#6a9955" opacity="0.42"/><rect x="1792.60" y="125.16" width="2" height="1.5" fill="#9cdcfe" opacity="0.42"/><rect x="1795.60" y="125.16" width="1" height="1.5" fill="#d4d4d4" opacity="0.42"/><rect x="1797.60" y="125.16" width="8" height="1.5" fill="#4ec9b0" opacity="0.42"/><rect x="1805.60" y="125.16" width="1" height="1.5" fill="#ffd700" opacity="0.42"/><rect x="1806.60" y="125.16" width="7" height="1.5" fill="#9cdcfe" opacity="0.42"/><rect x="1813.60" y="125.16" width="1" height="1.5" fill="#d4d4d4" opacity="0.42"/><rect x="1814.60" y="125.16" width="16" height="1.5" fill="#4fc1ff" opacity="0.42"/><rect x="1830.60" y="125.16" width="1" height="1.5" fill="#ffd700" opacity="0.42"/><rect x="1792.60" y="127.12" width="5" height="1.5" fill="#9cdcfe" opacity="0.42"/><rect x="1798.60" y="127.12" width="1" height="1.5" fill="#d4d4d4" opacity="0.42"/><rect x="1800.60" y="127.12" width="2" height="1.5" fill="#9cdcfe" opacity="0.42"/><rect x="1802.60" y="127.12" width="1" height="1.5" fill="#d4d4d4" opacity="0.42"/><rect x="1803.60" y="127.12" width="5" height="1.5" fill="#dcdcaa" opacity="0.42"/><rect x="1808.60" y="127.12" width="1" height="1.5" fill="#ffd700" opacity="0.42"/><rect x="1809.60" y="127.12" width="19" height="1.5" fill="#4fc1ff" opacity="0.42"/><rect x="1828.60" y="127.12" width="1" height="1.5" fill="#ffd700" opacity="0.42"/><rect x="1792.60" y="133.00" width="5" height="1.5" fill="#569cd6" opacity="0.42"/><rect x="1798.60" y="133.00" width="3" height="1.5" fill="#569cd6" opacity="0.42"/><rect x="1802.60" y="133.00" width="20" height="1.5" fill="#dcdcaa" opacity="0.42"/><rect x="1822.60" y="133.00" width="1" height="1.5" fill="#ffd700" opacity="0.42"/><rect x="1823.60" y="133.00" width="4" height="1.5" fill="#9cdcfe" opacity="0.42"/><rect x="1827.60" y="133.00" width="1" height="1.5" fill="#d4d4d4" opacity="0.42"/><rect x="1829.60" y="133.00" width="3" height="1.5" fill="#4ec9b0" opacity="0.42"/><rect x="1832.60" y="133.00" width="1" height="1.5" fill="#d4d4d4" opacity="0.42"/><rect x="1834.60" y="133.00" width="5" height="1.5" fill="#9cdcfe" opacity="0.42"/><rect x="1839.60" y="133.00" width="1" height="1.5" fill="#d4d4d4" opacity="0.42"/><rect x="1841.60" y="133.00" width="3" height="1.5" fill="#4ec9b0" opacity="0.42"/><rect x="1845.60" y="133.00" width="1" height="1.5" fill="#d4d4d4" opacity="0.42"/><rect x="1847.60" y="133.00" width="1" height="1.5" fill="#b5cea8" opacity="0.42"/><rect x="1848.60" y="133.00" width="1" height="1.5" fill="#ffd700" opacity="0.42"/><rect x="1849.60" y="133.00" width="1" height="1.5" fill="#d4d4d4" opacity="0.42"/><rect x="1796.60" y="134.96" width="3" height="1.5" fill="#ce9178" opacity="0.42"/><rect x="1796.60" y="136.92" width="5" height="1.5" fill="#ce9178" opacity="0.42"/><rect x="1802.60" y="136.92" width="9" height="1.5" fill="#ce9178" opacity="0.42"/><rect x="1812.60" y="136.92" width="4" height="1.5" fill="#ce9178" opacity="0.42"/><rect x="1817.60" y="136.92" width="6" height="1.5" fill="#ce9178" opacity="0.42"/><rect x="1824.60" y="136.92" width="5" height="1.5" fill="#ce9178" opacity="0.42"/><rect x="1830.60" y="136.92" width="9" height="1.5" fill="#ce9178" opacity="0.42"/><rect x="1796.60" y="138.88" width="3" height="1.5" fill="#ce9178" opacity="0.42"/><rect x="1796.60" y="142.80" width="1" height="1.5" fill="#6a9955" opacity="0.42"/><rect x="1802.60" y="142.80" width="7" height="1.5" fill="#6a9955" opacity="0.42"/><rect x="1810.60" y="142.80" width="4" height="1.5" fill="#6a9955" opacity="0.42"/><rect x="1815.60" y="142.80" width="1" height="1.5" fill="#6a9955" opacity="0.42"/><rect x="1817.60" y="142.80" width="6" height="1.5" fill="#6a9955" opacity="0.42"/><rect x="1824.60" y="142.80" width="6" height="1.5" fill="#6a9955" opacity="0.42"/><rect x="1831.60" y="142.80" width="10" height="1.5" fill="#6a9955" opacity="0.42"/><rect x="1796.60" y="144.76" width="6" height="1.5" fill="#9cdcfe" opacity="0.42"/><rect x="1803.60" y="144.76" width="1" height="1.5" fill="#d4d4d4" opacity="0.42"/><rect x="1805.60" y="144.76" width="5" height="1.5" fill="#c586c0" opacity="0.42"/><rect x="1811.60" y="144.76" width="10" height="1.5" fill="#dcdcaa" opacity="0.42"/><rect x="1821.60" y="144.76" width="1" height="1.5" fill="#ffd700" opacity="0.42"/><rect x="1822.60" y="144.76" width="4" height="1.5" fill="#9cdcfe" opacity="0.42"/><rect x="1826.60" y="144.76" width="1" height="1.5" fill="#ffd700" opacity="0.42"/><rect x="1796.60" y="148.68" width="1" height="1.5" fill="#6a9955" opacity="0.42"/><rect x="1802.60" y="148.68" width="8" height="1.5" fill="#6a9955" opacity="0.42"/><rect x="1811.60" y="148.68" width="6" height="1.5" fill="#6a9955" opacity="0.42"/><rect x="1818.60" y="148.68" width="2" height="1.5" fill="#6a9955" opacity="0.42"/><rect x="1821.60" y="148.68" width="4" height="1.5" fill="#6a9955" opacity="0.42"/><rect x="1826.60" y="148.68" width="1" height="1.5" fill="#6a9955" opacity="0.42"/><rect x="1828.60" y="148.68" width="3" height="1.5" fill="#6a9955" opacity="0.42"/><rect x="1832.60" y="148.68" width="2" height="1.5" fill="#6a9955" opacity="0.42"/><rect x="1835.60" y="148.68" width="6" height="1.5" fill="#6a9955" opacity="0.42"/><rect x="1796.60" y="150.64" width="3" height="1.5" fill="#9cdcfe" opacity="0.42"/><rect x="1800.60" y="150.64" width="1" height="1.5" fill="#d4d4d4" opacity="0.42"/><rect x="1802.60" y="150.64" width="5" height="1.5" fill="#c586c0" opacity="0.42"/><rect x="1808.60" y="150.64" width="7" height="1.5" fill="#4ec9b0" opacity="0.42"/><rect x="1815.60" y="150.64" width="1" height="1.5" fill="#d4d4d4" opacity="0.42"/><rect x="1816.60" y="150.64" width="9" height="1.5" fill="#dcdcaa" opacity="0.42"/><rect x="1825.60" y="150.64" width="1" height="1.5" fill="#ffd700" opacity="0.42"/><rect x="1800.60" y="152.60" width="5" height="1.5" fill="#9cdcfe" opacity="0.42"/><rect x="1805.60" y="152.60" width="1" height="1.5" fill="#d4d4d4" opacity="0.42"/><rect x="1806.60" y="152.60" width="5" height="1.5" fill="#9cdcfe" opacity="0.42"/><rect x="1811.60" y="152.60" width="1" height="1.5" fill="#d4d4d4" opacity="0.42"/><rect x="1800.60" y="154.56" width="6" height="1.5" fill="#9cdcfe" opacity="0.42"/><rect x="1806.60" y="154.56" width="1" height="1.5" fill="#d4d4d4" opacity="0.42"/><rect x="1807.60" y="154.56" width="6" height="1.5" fill="#9cdcfe" opacity="0.42"/><rect x="1813.60" y="154.56" width="1" height="1.5" fill="#d4d4d4" opacity="0.42"/><rect x="1800.60" y="156.52" width="5" height="1.5" fill="#9cdcfe" opacity="0.42"/><rect x="1805.60" y="156.52" width="1" height="1.5" fill="#d4d4d4" opacity="0.42"/><rect x="1806.60" y="156.52" width="5" height="1.5" fill="#9cdcfe" opacity="0.42"/><rect x="1811.60" y="156.52" width="1" height="1.5" fill="#d4d4d4" opacity="0.42"/><rect x="1800.60" y="158.48" width="16" height="1.5" fill="#9cdcfe" opacity="0.42"/><rect x="1816.60" y="158.48" width="1" height="1.5" fill="#d4d4d4" opacity="0.42"/><rect x="1817.60" y="158.48" width="4" height="1.5" fill="#569cd6" opacity="0.42"/><rect x="1796.60" y="160.44" width="1" height="1.5" fill="#ffd700" opacity="0.42"/><rect x="1796.60" y="164.36" width="1" height="1.5" fill="#6a9955" opacity="0.42"/><rect x="1802.60" y="164.36" width="7" height="1.5" fill="#6a9955" opacity="0.42"/><rect x="1810.60" y="164.36" width="8" height="1.5" fill="#6a9955" opacity="0.42"/><rect x="1819.60" y="164.36" width="4" height="1.5" fill="#6a9955" opacity="0.42"/><rect x="1796.60" y="166.32" width="7" height="1.5" fill="#9cdcfe" opacity="0.42"/><rect x="1804.60" y="166.32" width="1" height="1.5" fill="#d4d4d4" opacity="0.42"/><rect x="1806.60" y="166.32" width="2" height="1.5" fill="#ffd700" opacity="0.42"/><rect x="1796.60" y="168.28" width="3" height="1.5" fill="#c586c0" opacity="0.42"/><rect x="1800.60" y="168.28" width="5" height="1.5" fill="#9cdcfe" opacity="0.42"/><rect x="1806.60" y="168.28" width="2" height="1.5" fill="#c586c0" opacity="0.42"/><rect x="1809.60" y="168.28" width="3" height="1.5" fill="#9cdcfe" opacity="0.42"/><rect x="1812.60" y="168.28" width="1" height="1.5" fill="#d4d4d4" opacity="0.42"/><rect x="1813.60" y="168.28" width="3" height="1.5" fill="#dcdcaa" opacity="0.42"/><rect x="1816.60" y="168.28" width="1" height="1.5" fill="#ffd700" opacity="0.42"/><rect x="1817.60" y="168.28" width="9" height="1.5" fill="#ce9178" opacity="0.42"/><rect x="1826.60" y="168.28" width="1" height="1.5" fill="#d4d4d4" opacity="0.42"/><rect x="1828.60" y="168.28" width="2" height="1.5" fill="#da70d6" opacity="0.42"/><rect x="1830.60" y="168.28" width="1" height="1.5" fill="#ffd700" opacity="0.42"/><rect x="1831.60" y="168.28" width="1" height="1.5" fill="#d4d4d4" opacity="0.42"/><rect x="1800.60" y="170.24" width="4" height="1.5" fill="#9cdcfe" opacity="0.42"/><rect x="1805.60" y="170.24" width="1" height="1.5" fill="#d4d4d4" opacity="0.42"/><rect x="1807.60" y="170.24" width="5" height="1.5" fill="#9cdcfe" opacity="0.42"/><rect x="1812.60" y="170.24" width="1" height="1.5" fill="#d4d4d4" opacity="0.42"/><rect x="1813.60" y="170.24" width="3" height="1.5" fill="#dcdcaa" opacity="0.42"/><rect x="1816.60" y="170.24" width="1" height="1.5" fill="#ffd700" opacity="0.42"/><rect x="1817.60" y="170.24" width="10" height="1.5" fill="#ce9178" opacity="0.42"/><rect x="1827.60" y="170.24" width="1" height="1.5" fill="#d4d4d4" opacity="0.42"/><rect x="1829.60" y="170.24" width="2" height="1.5" fill="#da70d6" opacity="0.42"/><rect x="1831.60" y="170.24" width="1" height="1.5" fill="#ffd700" opacity="0.42"/><rect x="1800.60" y="172.20" width="7" height="1.5" fill="#9cdcfe" opacity="0.42"/><rect x="1808.60" y="172.20" width="1" height="1.5" fill="#d4d4d4" opacity="0.42"/><rect x="1810.60" y="172.20" width="4" height="1.5" fill="#9cdcfe" opacity="0.42"/><rect x="1814.60" y="172.20" width="1" height="1.5" fill="#d4d4d4" opacity="0.42"/><rect x="1815.60" y="172.20" width="3" height="1.5" fill="#dcdcaa" opacity="0.42"/><rect x="1818.60" y="172.20" width="1" height="1.5" fill="#ffd700" opacity="0.42"/><rect x="1819.60" y="172.20" width="6" height="1.5" fill="#ce9178" opacity="0.42"/><rect x="1825.60" y="172.20" width="1" height="1.5" fill="#ffd700" opacity="0.42"/><rect x="1800.60" y="176.12" width="2" height="1.5" fill="#c586c0" opacity="0.42"/><rect x="1803.60" y="176.12" width="7" height="1.5" fill="#9cdcfe" opacity="0.42"/><rect x="1810.60" y="176.12" width="1" height="1.5" fill="#d4d4d4" opacity="0.42"/><rect x="1804.60" y="178.08" width="7" height="1.5" fill="#9cdcfe" opacity="0.42"/><rect x="1811.60" y="178.08" width="1" height="1.5" fill="#d4d4d4" opacity="0.42"/><rect x="1812.60" y="178.08" width="6" height="1.5" fill="#dcdcaa" opacity="0.42"/><rect x="1818.60" y="178.08" width="1" height="1.5" fill="#ffd700" opacity="0.42"/><rect x="1819.60" y="178.08" width="7" height="1.5" fill="#9cdcfe" opacity="0.42"/><rect x="1826.60" y="178.08" width="1" height="1.5" fill="#ffd700" opacity="0.42"/><rect x="1796.60" y="182.00" width="6" height="1.5" fill="#c586c0" opacity="0.42"/><rect x="1803.60" y="182.00" width="7" height="1.5" fill="#9cdcfe" opacity="0.42"/></g>
<g fill="none" stroke="#cccccc" stroke-width="1.15" stroke-linecap="round" stroke-linejoin="round"><path d="M11.2 1005.4l4.4 4.4-4.4 4.4M22.4 1000.8l-4.6 4.6 4.6 4.6"/><circle cx="46.4" cy="1002.6" r="2"/><circle cx="46.4" cy="1013.6" r="2"/><circle cx="54.6" cy="1005.4" r="2"/><path d="M46.4 1004.6v7M54.6 1007.4c0 2.4-2 3.4-4.4 3.4h-1.4c-1.2 0-2.4 0.8-2.4 1.8"/><path d="M105.4 1002.4A5.8 5.8 0 0 0 102.4 1013.2M103 1013A5.8 5.8 0 0 0 106 1002.2"/><circle cx="136.6" cy="1008" r="6.6"/><path d="M133.6 1005l6 6M139.6 1005l-6 6"/><path d="M167.6 1001.4l7 12.6h-14z"/><path d="M167.6 1005.8v4M167.6 1011.6v0.3"/></g>
<path d="M104.4 999.6l3.6 2.8-3.2 2.6z M103.6 1015.4l-3.6-2.8 3.2-2.6z" fill="#cccccc"/>
<text x="61.90" y="1012.90" font-family="Liberation Sans" font-size="12.6" font-weight="normal" font-style="normal" fill="#cccccc" textLength="27.07" lengthAdjust="spacingAndGlyphs" style="white-space:pre">main</text>
<text x="149.40" y="1012.90" font-family="Liberation Sans" font-size="12.6" font-weight="normal" font-style="normal" fill="#cccccc" textLength="5.91" lengthAdjust="spacingAndGlyphs" style="white-space:pre">0</text>
<text x="179.00" y="1012.90" font-family="Liberation Sans" font-size="12.6" font-weight="normal" font-style="normal" fill="#cccccc" textLength="7.01" lengthAdjust="spacingAndGlyphs" style="white-space:pre">0</text>
<path d="M212.6 1001.6l-6 8h3.4l-2.4 6 6.2-8.2h-3.4z" fill="#f28b3c"/>
<text x="223.40" y="1012.90" font-family="Liberation Sans" font-size="12.6" font-weight="normal" font-style="normal" fill="#cccccc" textLength="96.03" lengthAdjust="spacingAndGlyphs" style="white-space:pre">BLACKBOX Agent</text>
<text x="336.60" y="1012.90" font-family="Liberation Sans" font-size="12.6" font-weight="normal" font-style="normal" fill="#cccccc" textLength="77.38" lengthAdjust="spacingAndGlyphs" style="white-space:pre">Open Website</text>
<text x="430.60" y="1012.90" font-family="Liberation Sans" font-size="12.6" font-weight="normal" font-style="normal" fill="#cccccc" textLength="150.03" lengthAdjust="spacingAndGlyphs" style="white-space:pre">Generate Commit Message</text>
<g fill="none" stroke="#cccccc" stroke-width="1.2"><circle cx="1249" cy="1006.6" r="5.4"/><path d="M1246.4 1006.6h5.2M1253 1010.6l4.4 4.4"/></g>
<text x="1274.70" y="1012.90" font-family="Liberation Sans" font-size="12.6" font-weight="normal" font-style="normal" fill="#cccccc" textLength="57.62" lengthAdjust="spacingAndGlyphs" style="white-space:pre">Ln 1, Col 1</text>
<text x="1349.40" y="1012.90" font-family="Liberation Sans" font-size="12.6" font-weight="normal" font-style="normal" fill="#cccccc" textLength="50.33" lengthAdjust="spacingAndGlyphs" style="white-space:pre">Spaces: 4</text>
<text x="1416.90" y="1012.90" font-family="Liberation Sans" font-size="12.6" font-weight="normal" font-style="normal" fill="#cccccc" textLength="32.78" lengthAdjust="spacingAndGlyphs" style="white-space:pre">UTF-8</text>
<text x="1466.00" y="1012.90" font-family="Liberation Sans" font-size="12.6" font-weight="normal" font-style="normal" fill="#cccccc" textLength="28.02" lengthAdjust="spacingAndGlyphs" style="white-space:pre">CRLF</text>
<text x="1511.70" y="1012.90" font-family="Liberation Sans" font-size="12.6" font-weight="normal" font-style="normal" fill="#cccccc" textLength="13.81" lengthAdjust="spacingAndGlyphs" style="white-space:pre">{ }</text>
<text x="1532.80" y="1012.90" font-family="Liberation Sans" font-size="12.6" font-weight="normal" font-style="normal" fill="#cccccc" textLength="38.98" lengthAdjust="spacingAndGlyphs" style="white-space:pre">Python</text>
<path d="M1588.6 1010.6c0-2.4 1.6-4 3.6-4.4h9.6c2 0.4 3.6 2 3.6 4.4 0 2.6-3.6 4.4-8.4 4.4s-8.4-1.8-8.4-4.4z" fill="#cccccc"/><circle cx="1594" cy="1004" r="3" fill="#181818" stroke="#cccccc" stroke-width="1.4"/><circle cx="1600.4" cy="1004" r="3" fill="#181818" stroke="#cccccc" stroke-width="1.4"/><rect x="1592.2" y="1008.4" width="9.8" height="4.2" rx="0.8" fill="#111111"/><rect x="1594.8" y="1009.4" width="1.4" height="3.2" fill="#cccccc"/><rect x="1598" y="1009.4" width="1.4" height="3.2" fill="#cccccc"/>
<text x="1621.70" y="1012.90" font-family="Liberation Sans" font-size="12.6" font-weight="normal" font-style="normal" fill="#cccccc" textLength="68.57" lengthAdjust="spacingAndGlyphs" style="white-space:pre">base (3.12.7)</text>
<g fill="none" stroke="#cccccc" stroke-width="1.1"><path d="M1710.6 1003.2a7 7 0 0 0 0 9.8M1721 1003.2a7 7 0 0 1 0 9.8M1713 1005.4a3.8 3.8 0 0 0 0 5.4M1718.6 1005.4a3.8 3.8 0 0 1 0 5.4"/></g><circle cx="1715.8" cy="1008.1" r="1.2" fill="#cccccc"/>
<text x="1727.50" y="1012.90" font-family="Liberation Sans" font-size="12.6" font-weight="normal" font-style="normal" fill="#cccccc" textLength="40.52" lengthAdjust="spacingAndGlyphs" style="white-space:pre">Go Live</text>
<path d="M1795.6 1002l-5.6 7.4h3.2l-2.2 5.8 5.8-7.6h-3.2z" fill="#f28b3c"/>
<text x="1805.00" y="1012.90" font-family="Liberation Sans" font-size="12.6" font-weight="normal" font-style="normal" fill="#cccccc" textLength="72.98" lengthAdjust="spacingAndGlyphs" style="white-space:pre">AI Code Chat</text>
<g fill="none" stroke="#cccccc" stroke-width="1.2"><path d="M1898 1011.8h12.6l-1.6-2.2v-4a4.7 4.7 0 0 0-9.4 0v4z"/><path d="M1902.2 1013.6a2.1 2.1 0 0 0 4.2 0"/></g><circle cx="1909.2" cy="1002.4" r="2.6" fill="#cccccc" stroke="#181818" stroke-width="1"/>
<defs><linearGradient id="gwin" x1="0" y1="0" x2="1" y2="1"><stop offset="0" stop-color="#52d4fa"/><stop offset="1" stop-color="#1a8be0"/></linearGradient><linearGradient id="gorange" x1="0" y1="0" x2="0" y2="1"><stop offset="0" stop-color="#ffc21a"/><stop offset="1" stop-color="#f2641c"/></linearGradient><linearGradient id="gdiam" x1="0" y1="0" x2="1" y2="0"><stop offset="0" stop-color="#ff3fae"/><stop offset="0.5" stop-color="#ff1a1a"/><stop offset="1" stop-color="#ff9a00"/></linearGradient><linearGradient id="gedge" x1="0" y1="0" x2="1" y2="1"><stop offset="0" stop-color="#36c3f0"/><stop offset="0.6" stop-color="#1d8fe0"/><stop offset="1" stop-color="#46d27a"/></linearGradient><linearGradient id="gcop" x1="0" y1="0" x2="1" y2="1"><stop offset="0" stop-color="#2ab0ff"/><stop offset="0.4" stop-color="#7ed35a"/><stop offset="0.6" stop-color="#ffb02a"/><stop offset="1" stop-color="#d44dff"/></linearGradient><linearGradient id="gword" x1="0" y1="0" x2="0" y2="1"><stop offset="0" stop-color="#8fd0ff"/><stop offset="1" stop-color="#1e5ee0"/></linearGradient><linearGradient id="gphoto" x1="0" y1="0" x2="1" y2="1"><stop offset="0" stop-color="#2ca8f0"/><stop offset="1" stop-color="#6a5ad8"/></linearGradient></defs>
<circle cx="40.8" cy="1051.2" r="12.4" fill="url(#gorange)"/><circle cx="50" cy="1039" r="9.6" fill="#c42b1c"/>
<g fill="url(#gwin)"><rect x="292.7" y="1035.7" width="14" height="14" rx="1"/><rect x="308.3" y="1035.7" width="14" height="14" rx="1"/><rect x="292.7" y="1051.2" width="14" height="14" rx="1"/><rect x="308.3" y="1051.2" width="14" height="14" rx="1"/></g>
<rect x="340" y="1031" width="272.7" height="38" rx="19" fill="#f3f3f3"/>
<g fill="none" stroke="#1a1a1a" stroke-width="1.8"><circle cx="361.6" cy="1049" r="6.6"/><path d="M366.4 1053.8l5 5"/></g>
<rect x="628.8" y="1043" width="18" height="22" rx="1.5" fill="#5a5a5a"/><rect x="638.6" y="1035" width="20.4" height="20.4" rx="1.5" fill="#e8e8e8"/><rect x="638.6" y="1043" width="8.2" height="12.4" fill="#a8a8a8"/>
<defs><linearGradient id="gcopL" x1="0" y1="0" x2="0" y2="1"><stop offset="0" stop-color="#1a9cff"/><stop offset="0.5" stop-color="#3cc68a"/><stop offset="1" stop-color="#f6d40c"/></linearGradient><linearGradient id="gcopR" x1="0" y1="0" x2="0" y2="1"><stop offset="0" stop-color="#a957f5"/><stop offset="0.5" stop-color="#ef5f9a"/><stop offset="1" stop-color="#ffae4a"/></linearGradient></defs><path d="M690.2 1037.4h13.4c1.6 0 2.6 1.2 2.2 2.8l-4.2 13.8c-0.5 1.4-1.6 1.9-3 1.9h-12.6c-1.6 0-2.4-1.2-2-2.8l4.2-13.8c0.4-1.3 1.2-1.9 2-1.9z" fill="url(#gcopL)"/><path d="M698.2 1043.6h12.4c1.6 0 2.4 1.2 2 2.8l-4.2 13.8c-0.4 1.2-1.4 1.8-2.8 1.8h-12.6c-1.6 0-2.4-1.2-2-2.8l4.2-13.8c0.4-1.2 1.4-1.8 3-1.8z" fill="url(#gcopR)"/><path d="M698.6 1043.8l-4.2 12" stroke="#1e1e1e" stroke-width="2.4"/>
<path d="M738.8 1039a2 2 0 0 1 2-2h7.4l3 3h16.2a2 2 0 0 1 2 2V1063a2 2 0 0 1-2 2h-26.6a2 2 0 0 1-2-2z" fill="#f4c430"/><path d="M738.8 1042h30.6V1063a2 2 0 0 1-2 2h-26.6a2 2 0 0 1-2-2z" fill="#fcd74a"/><rect x="744.6" y="1056.4" width="19" height="8.6" rx="2" fill="#1f7fd8"/><rect x="748.6" y="1058.6" width="11" height="1.6" fill="#bfe0ff"/>
<defs><linearGradient id="gedge2" x1="0" y1="0" x2="1" y2="0.7"><stop offset="0" stop-color="#2fb0f2"/><stop offset="0.5" stop-color="#2dc4c8"/><stop offset="1" stop-color="#66e35e"/></linearGradient><linearGradient id="gedge3" x1="0" y1="0" x2="0" y2="1"><stop offset="0" stop-color="#1a8ee0"/><stop offset="1" stop-color="#0f62c0"/></linearGradient></defs><circle cx="809" cy="1049.8" r="15.1" fill="url(#gedge2)"/><path d="M793.9 1050.6A15.1 15.1 0 0 0 822.2 1057.4C817 1060.8 807.6 1061 803.6 1055.6 801.4 1052.6 802.2 1048 806 1046.4 808.2 1045.6 810.6 1046 812 1047.2 810.4 1042.6 805 1040.6 800.4 1042.4 796.4 1044 794 1047 793.9 1050.6Z" fill="url(#gedge3)"/><path d="M803.6 1055.6C807.6 1061 817 1060.8 822.2 1057.4A15.1 15.1 0 0 1 809 1064.9C803 1064.6 799 1060 800 1053.6 801 1050 803 1048 806 1046.4 802.2 1048 801.4 1052.6 803.6 1055.6Z" fill="#0b4a9c" opacity="0.75"/><ellipse cx="809" cy="1049.6" rx="2.8" ry="2.4" fill="#1e1e1e"/>
<rect x="848.6" y="1041" width="29.8" height="24" rx="3.4" fill="#f2f2f2"/><path d="M856 1041.6v-4.4h15v4.4" fill="none" stroke="#1ea0e8" stroke-width="2"/><rect x="857.6" y="1046.6" width="5" height="5" fill="#f25022"/><rect x="863.8" y="1046.6" width="5" height="5" fill="#7fba00"/><rect x="857.6" y="1052.8" width="5" height="5" fill="#00a4ef"/><rect x="863.8" y="1052.8" width="5" height="5" fill="#ffb900"/>
<rect x="904" y="1034.8" width="30.2" height="30.2" fill="#0061fe"/><g fill="#f7f5f2"><path d="M914.2 1042.4l-4.6 3 4.6 3 4.6-3z"/><path d="M923.8 1042.4l-4.6 3 4.6 3 4.6-3z"/><path d="M914.2 1048.2l-4.6 3 4.6 3 4.6-3z"/><path d="M923.8 1048.2l-4.6 3 4.6 3 4.6-3z"/><path d="M919 1052.2l-4.4 2.8 4.4 2.8 4.4-2.8z"/></g>
<path d="M974 1050 L961.01 1042.50 A15 15 0 0 1 986.99 1042.50 Z" fill="#e8453c"/><path d="M974 1050 L986.99 1042.50 A15 15 0 0 1 974.00 1065.00 Z" fill="#f9bc15"/><path d="M974 1050 L974.00 1065.00 A15 15 0 0 1 961.01 1042.50 Z" fill="#34a853"/><circle cx="974" cy="1050" r="6.6" fill="#ffffff"/><circle cx="974" cy="1050" r="5.2" fill="#4a8af4"/><circle cx="985" cy="1038.8" r="9.6" fill="#4c5660"/>
<path d="M1028.6 1035l14.6 14.6-14.6 14.6-14.6-14.6z" fill="url(#gdiam)"/>
<circle cx="1084" cy="1050" r="14.2" fill="#f4f4f4"/><g transform="translate(1072.6,1038.8) scale(0.95)" stroke-linecap="round" stroke-width="3.1"><path d="M4.2 10.2h6.6" stroke="#36c5f0"/><circle cx="10" cy="4.6" r="1.6" fill="#36c5f0"/><path d="M14.2 4.2v6.6" stroke="#2eb67d"/><circle cx="19.8" cy="10" r="1.6" fill="#2eb67d"/><path d="M13.4 14.2h6.6" stroke="#ecb22e"/><circle cx="14.2" cy="19.8" r="1.6" fill="#ecb22e"/><path d="M10.2 13.4v6.6" stroke="#e01e5a"/><circle cx="4.4" cy="14.2" r="1.6" fill="#e01e5a"/></g><circle cx="1094.8" cy="1038.8" r="9.6" fill="#d6284f"/>
<defs><linearGradient id="ggear" x1="0" y1="0" x2="0" y2="1"><stop offset="0" stop-color="#959ea7"/><stop offset="1" stop-color="#5d666f"/></linearGradient></defs>
<polygon points="1153.54,1045.56 1153.54,1054.44 1149.86,1054.61 1148.42,1057.10 1150.12,1060.37 1142.42,1064.81 1140.44,1061.71 1137.56,1061.71 1135.58,1064.81 1127.88,1060.37 1129.58,1057.10 1128.14,1054.61 1124.46,1054.44 1124.46,1045.56 1128.14,1045.39 1129.58,1042.90 1127.88,1039.63 1135.58,1035.19 1137.56,1038.29 1140.44,1038.29 1142.42,1035.19 1150.12,1039.63 1148.42,1042.90 1149.86,1045.39" fill="url(#ggear)" stroke="url(#ggear)" stroke-width="1.6" stroke-linejoin="round"/><circle cx="1139" cy="1050" r="7.2" fill="#ffffff"/><circle cx="1139" cy="1050" r="5.6" fill="#1560bd"/>
<rect x="1169.8" y="1025.2" width="43" height="49.4" rx="5" fill="#2b2b2b"/><rect x="1211" y="1026" width="6" height="48" rx="3" fill="#232323"/>
<g transform="translate(1178.8,1035) scale(1.27)"><path fill="#0e78c8" d="M23.15 2.587L18.21.21a1.494 1.494 0 0 0-1.705.29l-9.46 8.63-4.12-3.128a.999.999 0 0 0-1.276.057L.327 7.261A1 1 0 0 0 .326 8.74L3.899 12 .326 15.26a1 1 0 0 0 .001 1.479L1.65 17.94a.999.999 0 0 0 1.276.057l4.12-3.128 9.46 8.63a1.492 1.492 0 0 0 1.704.29l4.942-2.377A1.5 1.5 0 0 0 24 20.06V3.939a1.5 1.5 0 0 0-.85-1.352zm-5.146 14.861L10.826 12l7.178-5.448v10.896z"/><path fill="#28a8f4" d="M23.15 2.587L18.21.21a1.494 1.494 0 0 0-1.705.29L18 6.55v10.9l-1.5 6.05a1.492 1.492 0 0 0 1.704.29l4.942-2.377A1.5 1.5 0 0 0 24 20.06V3.939a1.5 1.5 0 0 0-.85-1.352z"/></g>
<rect x="1184.4" y="1070.4" width="19.4" height="3.4" rx="1.7" fill="#4cc2ff"/>
<path d="M1249 1050 L1236.01 1042.50 A15 15 0 0 1 1261.99 1042.50 Z" fill="#e8453c"/><path d="M1249 1050 L1261.99 1042.50 A15 15 0 0 1 1249.00 1065.00 Z" fill="#f9bc15"/><path d="M1249 1050 L1249.00 1065.00 A15 15 0 0 1 1236.01 1042.50 Z" fill="#34a853"/><circle cx="1249" cy="1050" r="6.6" fill="#ffffff"/><circle cx="1249" cy="1050" r="5.2" fill="#4a8af4"/><circle cx="1259.4" cy="1038.8" r="9.6" fill="#1a7fd4"/>
<defs><linearGradient id="ggh" x1="0" y1="0" x2="0" y2="1"><stop offset="0" stop-color="#9a3fc0"/><stop offset="1" stop-color="#6a34a8"/></linearGradient></defs><circle cx="1304" cy="1049.7" r="13.8" fill="url(#ggh)"/><path transform="translate(1294,1039.5) scale(0.833)" d="M12 .297c-6.63 0-12 5.373-12 12 0 5.303 3.438 9.8 8.205 11.385.6.113.82-.258.82-.577 0-.285-.01-1.04-.015-2.04-3.338.724-4.042-1.61-4.042-1.61C4.422 18.07 3.633 17.7 3.633 17.7c-1.087-.744.084-.729.084-.729 1.205.084 1.838 1.236 1.838 1.236 1.07 1.835 2.809 1.305 3.495.998.108-.776.417-1.305.76-1.605-2.665-.3-5.466-1.332-5.466-5.930 0-1.31.465-2.38 1.235-3.22-.135-.303-.54-1.523.105-3.176 0 0 1.005-.322 3.3 1.23.96-.267 1.98-.399 3-.405 1.02.006 2.04.138 3 .405 2.28-1.552 3.285-1.23 3.285-1.23.645 1.653.24 2.873.12 3.176.765.84 1.23 1.910 1.23 3.220 0 4.610-2.805 5.625-5.475 5.920.42.36.81 1.096.81 2.220 0 1.606-.015 2.896-.015 3.286 0 .315.21.69.825.57C20.565 22.092 24 17.592 24 12.297c0-6.627-5.373-12-12-12" fill="#f4f0f8"/>
<path d="M1359 1050 L1346.01 1042.50 A15 15 0 0 1 1371.99 1042.50 Z" fill="#e8453c"/><path d="M1359 1050 L1371.99 1042.50 A15 15 0 0 1 1359.00 1065.00 Z" fill="#f9bc15"/><path d="M1359 1050 L1359.00 1065.00 A15 15 0 0 1 1346.01 1042.50 Z" fill="#34a853"/><circle cx="1359" cy="1050" r="6.6" fill="#ffffff"/><circle cx="1359" cy="1050" r="5.2" fill="#4a8af4"/><circle cx="1369.8" cy="1038.8" r="9.6" fill="#c8391f"/>
<circle cx="1413.4" cy="1049.6" r="13" fill="none" stroke="#25d366" stroke-width="3"/><path d="M1400.6 1063.6l2.2-6.6 4.6 4.2z" fill="#25d366"/><path d="M1408 1044.6c0 5 4 9.4 9.2 9.4l1.6-2.4-2.6-1.4-1.2 1c-1.6-0.6-3.2-2.2-3.8-3.8l1-1.2-1.4-2.6z" fill="#25d366"/>
<rect x="1407" y="1028.8" width="34" height="20.2" rx="10.1" fill="#4cc2ff"/>
<defs><linearGradient id="gw1" x1="0" y1="0" x2="1" y2="0"><stop offset="0" stop-color="#41c8f8"/><stop offset="1" stop-color="#b9a6f5"/></linearGradient><linearGradient id="gw2" x1="0" y1="0" x2="1" y2="0"><stop offset="0" stop-color="#1f9be8"/><stop offset="1" stop-color="#6a7ef0"/></linearGradient><linearGradient id="gph" x1="0" y1="0" x2="1" y2="1"><stop offset="0" stop-color="#1f86e0"/><stop offset="1" stop-color="#8a4fc8"/></linearGradient></defs><clipPath id="cw"><rect x="1458" y="1036.2" width="22.2" height="26.9" rx="2.4"/></clipPath><g clip-path="url(#cw)"><rect x="1458" y="1036.2" width="22.2" height="9" fill="url(#gw1)"/><rect x="1458" y="1045.2" width="22.2" height="9.4" fill="url(#gw2)"/><rect x="1458" y="1054.6" width="22.2" height="8.5" fill="#1553d8"/></g><rect x="1454" y="1049.4" width="11.8" height="11" rx="1.6" fill="#1a44b8"/>
<clipPath id="cph"><rect x="1511" y="1037" width="25.8" height="25.7" rx="3"/></clipPath><g clip-path="url(#cph)"><rect x="1511" y="1037" width="25.8" height="25.7" fill="url(#gph)"/><path d="M1509 1062.7l13.4-15c1.2-1.3 2.8-1.3 4 0l11.4 12.6v2.4z" fill="#3cc6f4"/><path d="M1517 1062.7l9.2-9.6c0.9-0.9 2.2-0.9 3.1 0l8.5 8.6v1z" fill="#1a8ad8"/></g><circle cx="1530.5" cy="1041.2" r="2.4" fill="#f4f4f4"/>
<rect x="749.8" y="1070.4" width="8.4" height="3.4" rx="1.7" fill="#8a8a8a"/>
<rect x="969.8" y="1070.4" width="8.4" height="3.4" rx="1.7" fill="#8a8a8a"/>
<rect x="1079.8" y="1070.4" width="8.4" height="3.4" rx="1.7" fill="#8a8a8a"/>
<rect x="1134.8" y="1070.4" width="8.4" height="3.4" rx="1.7" fill="#8a8a8a"/>
<rect x="1244.8" y="1070.4" width="8.4" height="3.4" rx="1.7" fill="#8a8a8a"/>
<rect x="1299.8" y="1070.4" width="8.4" height="3.4" rx="1.7" fill="#8a8a8a"/>
<rect x="1354.8" y="1070.4" width="8.4" height="3.4" rx="1.7" fill="#8a8a8a"/>
<rect x="1409.8" y="1070.4" width="8.4" height="3.4" rx="1.7" fill="#8a8a8a"/>
<rect x="1464.8" y="1070.4" width="8.4" height="3.4" rx="1.7" fill="#8a8a8a"/>
<rect x="1519.8" y="1070.4" width="8.4" height="3.4" rx="1.7" fill="#8a8a8a"/>
<path d="M1636 1053.4l6.8-6.8 6.8 6.8" fill="none" stroke="#ffffff" stroke-width="1.4"/>
<path d="M1676 1058a5 5 0 0 1 0.4-10 6.6 6.6 0 0 1 12.4 1.6 4.2 4.2 0 0 1 0.4 8.4z" fill="#9a9a9a"/><path d="M1674 1044.6l19.4 15" stroke="#1c1c1c" stroke-width="2.6"/><path d="M1674 1044.6l19.4 15" stroke="#bdbdbd" stroke-width="1.1"/>
<g fill="none" stroke="#ffffff" stroke-width="1.5"><path d="M1712.8 1046.6a14.4 14.4 0 0 1 20 0M1715.6 1049.6a10 10 0 0 1 14.4 0M1718.4 1052.6a5.6 5.6 0 0 1 8.8 0"/></g><circle cx="1722.8" cy="1056.2" r="1.6" fill="#ffffff"/>
<g fill="none" stroke="#ffffff" stroke-width="1.4" stroke-linejoin="round"><path d="M1743.6 1046.6h3.6l5-4.2v15.2l-5-4.2h-3.6z"/><path d="M1755 1046.4a5 5 0 0 1 0 7.2M1758 1043.4a9.4 9.4 0 0 1 0 13.2M1761 1040.8a13 13 0 0 1 0 18.4"/></g>
<rect x="1773.2" y="1044.2" width="22.6" height="11.2" rx="2.8" fill="none" stroke="#ffffff" stroke-width="1.4"/><rect x="1796.4" y="1047.4" width="1.6" height="4.8" rx="0.8" fill="#ffffff"/><rect x="1775.2" y="1047.6" width="18.6" height="6" rx="1" fill="#8ed694"/><path d="M1786.2 1040.4l-4.8 6.4h3.6l-1.8 4.4 5.4-6.2h-3.6z" fill="#ffffff" stroke="#3a201b" stroke-width="0.8"/>
<text x="48.00" y="1043.20" font-family="Liberation Sans" font-size="12.5" font-weight="bold" font-style="normal" fill="#ffffff" textLength="4.61" lengthAdjust="spacingAndGlyphs" style="white-space:pre">1</text>
<text x="385.00" y="1056.70" font-family="Liberation Sans" font-size="15.2" font-weight="normal" font-style="normal" fill="#5d5d5d" textLength="50.98" lengthAdjust="spacingAndGlyphs" style="white-space:pre">Search</text>
<text x="982.00" y="1043.00" font-family="Liberation Sans" font-size="12" font-weight="bold" font-style="normal" fill="#c8c8c8" textLength="6.62" lengthAdjust="spacingAndGlyphs" style="white-space:pre">H</text>
<text x="1091.60" y="1043.40" font-family="Liberation Sans" font-size="12.4" font-weight="normal" font-style="normal" fill="#ffffff" textLength="6.41" lengthAdjust="spacingAndGlyphs" style="white-space:pre">3</text>
<text x="1256.00" y="1043.00" font-family="Liberation Sans" font-size="12" font-weight="bold" font-style="normal" fill="#ffffff" textLength="6.62" lengthAdjust="spacingAndGlyphs" style="white-space:pre">H</text>
<text x="1366.80" y="1043.40" font-family="Liberation Sans" font-size="12.4" font-weight="normal" font-style="normal" fill="#ffffff" textLength="6.22" lengthAdjust="spacingAndGlyphs" style="white-space:pre">S</text>
<text x="1412.60" y="1044.60" font-family="Liberation Sans" font-size="13.4" font-weight="normal" font-style="normal" fill="#1a1a1a" textLength="24.82" lengthAdjust="spacingAndGlyphs" style="white-space:pre">99+</text>
<text x="1455.4" y="1058.6" font-family="Liberation Sans" font-weight="bold" font-size="10.4" fill="#ffffff">W</text>
<text x="1859.00" y="1044.80" font-family="Liberation Sans" font-size="15" font-weight="normal" font-style="normal" fill="#ffffff" textLength="36.56" lengthAdjust="spacingAndGlyphs" style="white-space:pre">17:54</text>
<text x="1818.60" y="1064.70" font-family="Liberation Sans" font-size="15" font-weight="normal" font-style="normal" fill="#ffffff" textLength="77.00" lengthAdjust="spacingAndGlyphs" style="white-space:pre">10/03/2026</text>
</svg>
</body></html>
